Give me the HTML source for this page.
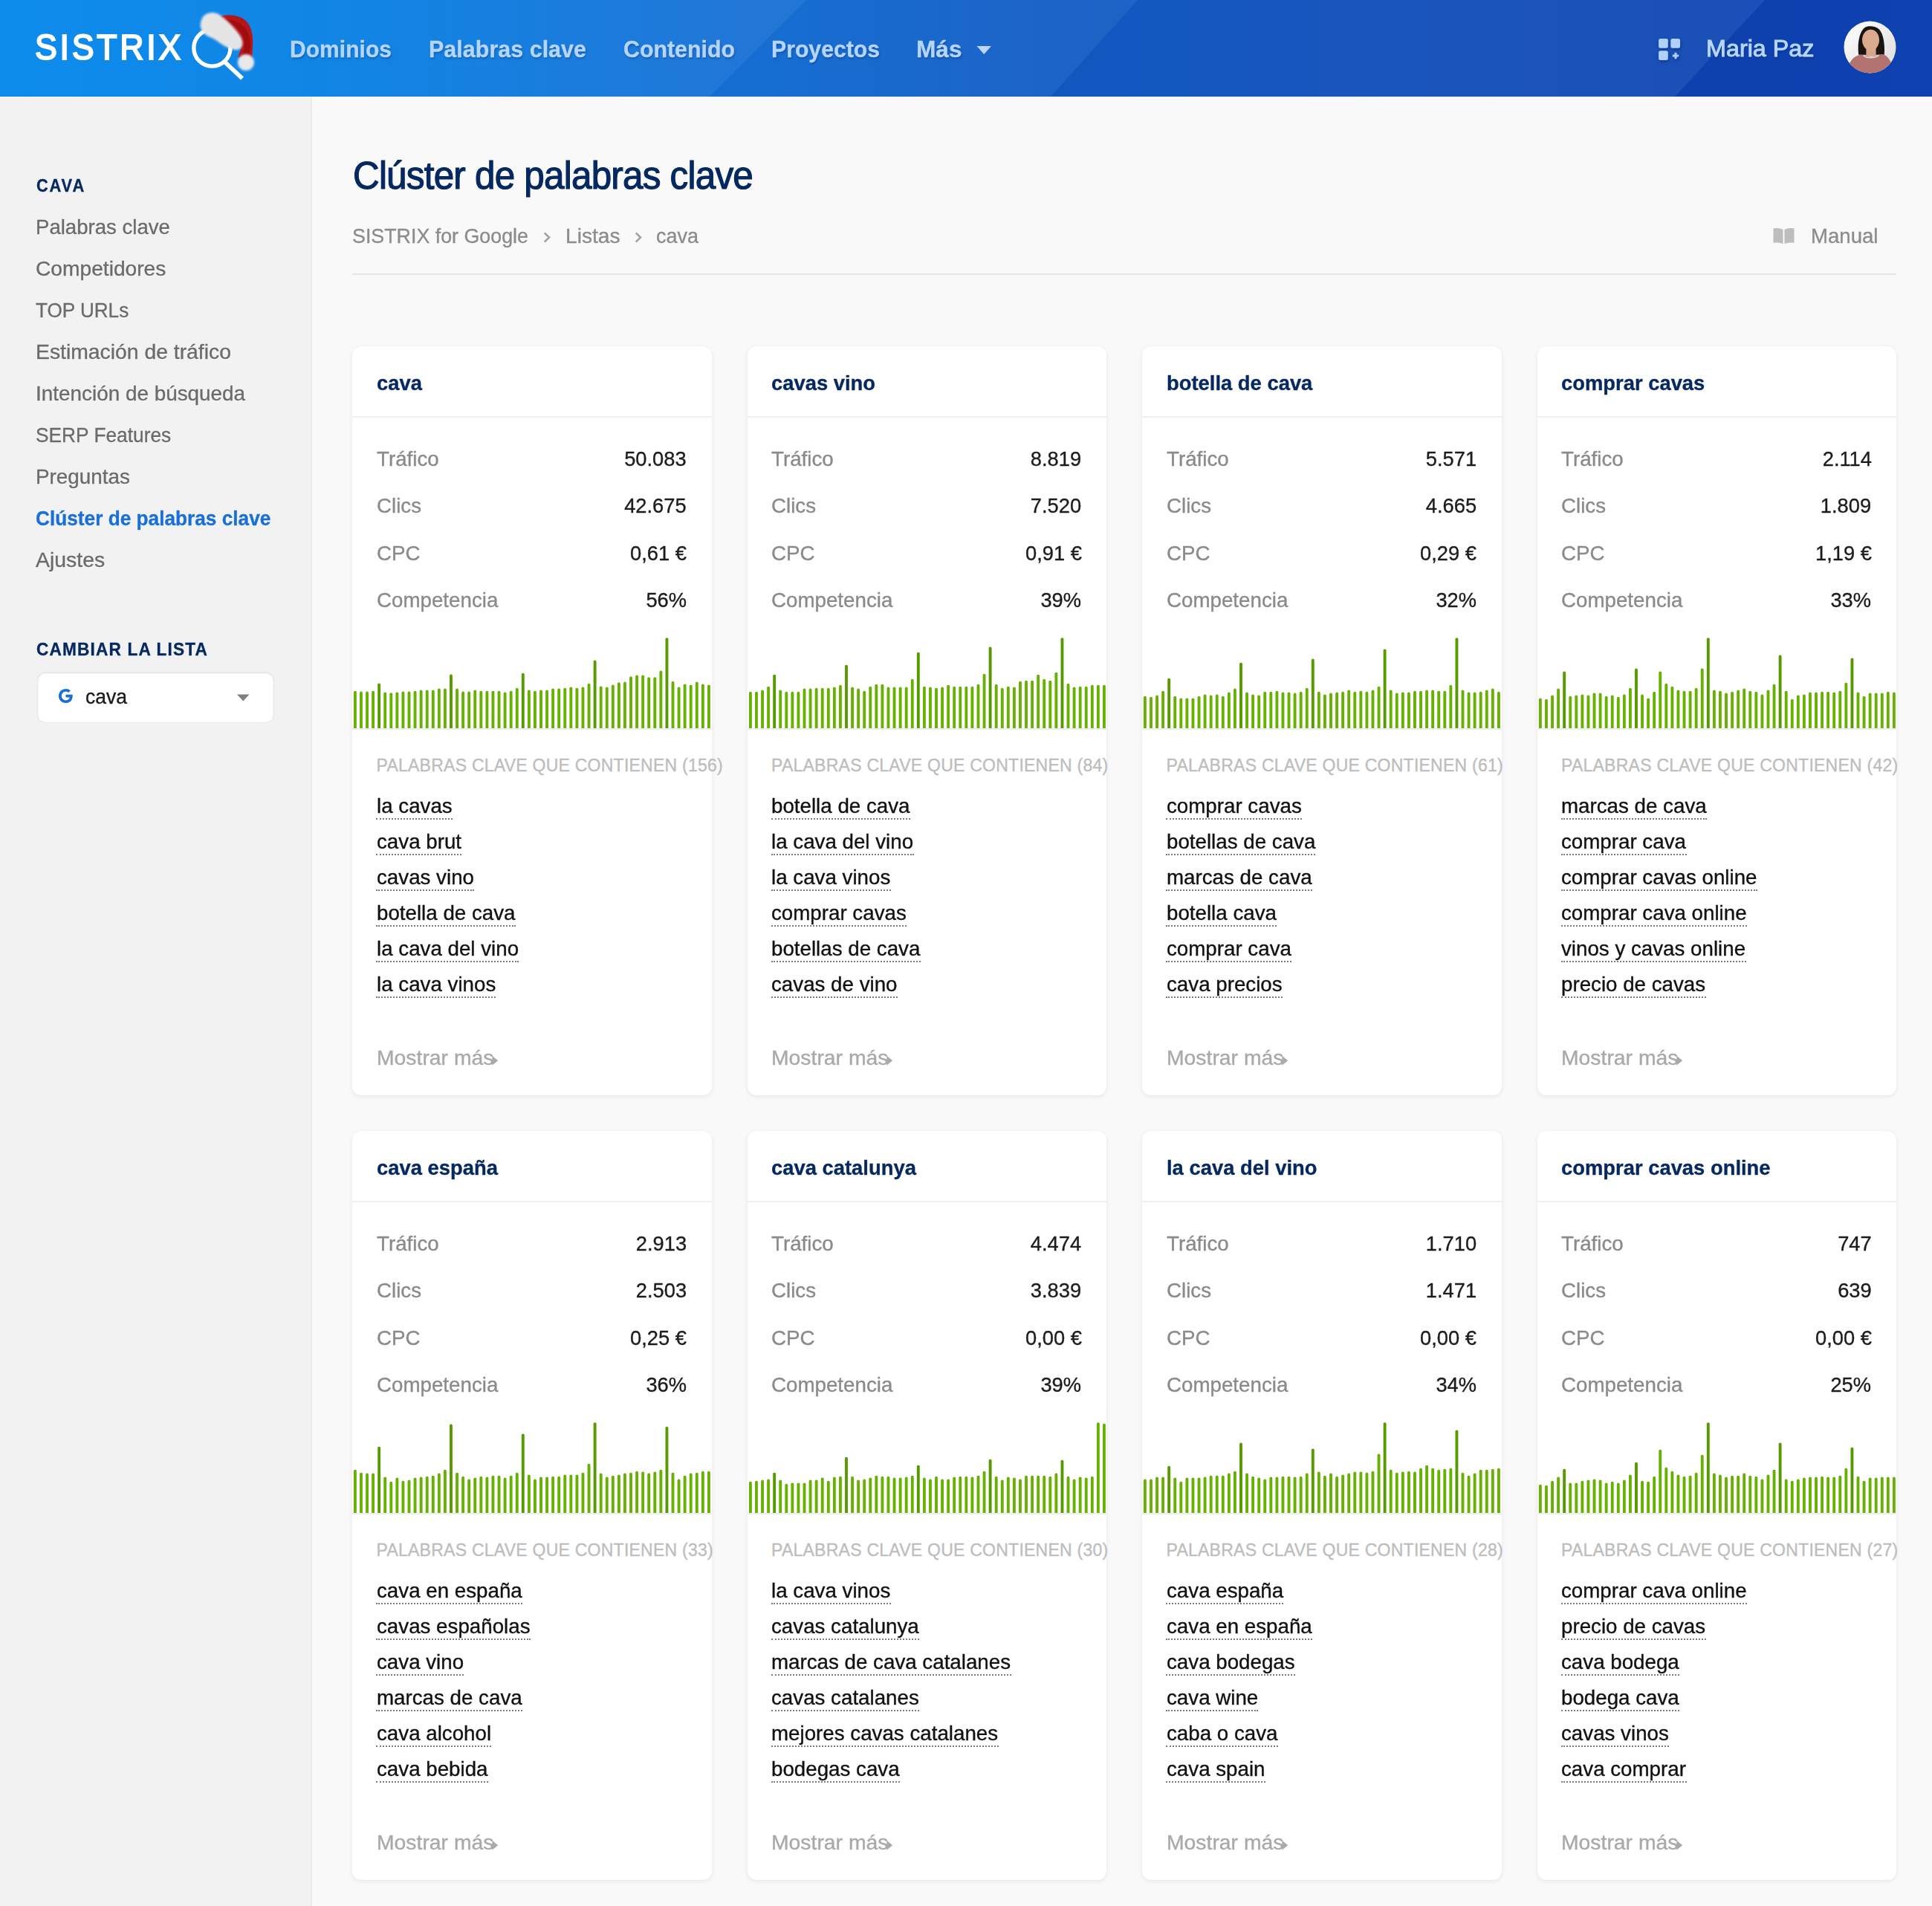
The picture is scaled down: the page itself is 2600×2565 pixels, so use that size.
<!DOCTYPE html><html><head><meta charset="utf-8"><style>
html,body{margin:0;padding:0}
body{width:2600px;height:2565px;position:relative;overflow:hidden;background:#f9f9f9;font-family:"Liberation Sans",sans-serif}
.t{position:absolute;white-space:nowrap;-webkit-text-stroke:0.35px currentColor}
.card{position:absolute;background:#fff;border-radius:12px;box-shadow:0 2px 6px rgba(0,0,0,0.07),0 0 2px rgba(0,0,0,0.03)}
.kw{position:absolute;white-space:nowrap}
</style></head><body>
<svg style="position:absolute;left:0;top:0" width="2600" height="130" viewBox="0 0 2600 130">
<defs>
<linearGradient id="g0" gradientUnits="userSpaceOnUse" x1="0" y1="0" x2="1021" y2="0"><stop offset="0" stop-color="#0d8cec"/><stop offset="0.49" stop-color="#1284e4"/><stop offset="1" stop-color="#2276d6"/></linearGradient>
<linearGradient id="g1" gradientUnits="userSpaceOnUse" x1="1021" y1="0" x2="1472" y2="0"><stop offset="0" stop-color="#166ed2"/><stop offset="1" stop-color="#1e62c6"/></linearGradient>
<linearGradient id="g2" gradientUnits="userSpaceOnUse" x1="1472" y1="0" x2="2315" y2="0"><stop offset="0" stop-color="#1257c0"/><stop offset="0.63" stop-color="#1b54bb"/><stop offset="1" stop-color="#1b50b6"/></linearGradient>
<linearGradient id="g3" gradientUnits="userSpaceOnUse" x1="2315" y1="0" x2="2600" y2="0"><stop offset="0" stop-color="#0e40ae"/><stop offset="1" stop-color="#0e42b0"/></linearGradient>
</defs>
<rect x="0" y="0" width="2600" height="130" fill="url(#g3)"/>
<polygon points="0,0 2375,0 2254,130 0,130" fill="url(#g2)"/>
<polygon points="0,0 1531,0 1414,130 0,130" fill="url(#g1)"/>
<polygon points="0,0 1085,0 955,130 0,130" fill="url(#g0)"/>
</svg>
<div class="t" style="left:47.00px;transform-origin:0 0;top:34.17px;font-size:48px;line-height:60px;color:#ffffff;font-weight:normal;letter-spacing:4px;transform:scaleX(0.9314);-webkit-text-stroke:2px #fff;">SISTRIX</div>
<svg style="position:absolute;left:240px;top:10px" width="110" height="110" viewBox="240 10 110 110">
<defs><filter id="fur" x="-30%" y="-30%" width="160%" height="160%"><feGaussianBlur stdDeviation="1.6"/></filter></defs>
<circle cx="285.4" cy="64.5" r="24.6" fill="none" stroke="#fff" stroke-width="5.4"/>
<line x1="302" y1="83" x2="326" y2="105.5" stroke="#fff" stroke-width="5.8"/>
<path d="M290,24 C304,18 322,19 332,29 C339,37 341,50 340,62 L339,79 L320,77 C324,68 326,60 324,52 C320,44 312,36 298,30 Z" fill="#b3171a"/>
<path d="M302,26 C316,25 330,33 335,47 C338,57 337,68 334,77 L325,76 C330,66 330,56 326,47 C321,38 312,31 302,26 Z" fill="#a00d0e"/>
<g filter="url(#fur)">
<path d="M271,27 C274,16 289,14 297,21 C305,27 316,37 323,48 C329,57 327,67 318,67 C308,66 300,61 292,55 C285,50 277,49 273,43 C269,38 269,32 271,27 Z" fill="#e6e5e5"/>
<circle cx="331" cy="84" r="11" fill="#e9e8e8"/>
</g>
</svg>
<div class="t" style="left:390.00px;transform-origin:0 0;top:45.91px;font-size:32px;line-height:40px;color:#b4d5fc;font-weight:bold;transform:scaleX(0.9398);text-shadow:1px 2px 3px rgba(0,30,90,0.35);">Dominios</div>
<div class="t" style="left:577.00px;transform-origin:0 0;top:45.91px;font-size:32px;line-height:40px;color:#b4d5fc;font-weight:bold;transform:scaleX(0.9533);text-shadow:1px 2px 3px rgba(0,30,90,0.35);">Palabras clave</div>
<div class="t" style="left:838.50px;transform-origin:0 0;top:45.91px;font-size:32px;line-height:40px;color:#b4d5fc;font-weight:bold;transform:scaleX(0.9482);text-shadow:1px 2px 3px rgba(0,30,90,0.35);">Contenido</div>
<div class="t" style="left:1037.50px;transform-origin:0 0;top:45.91px;font-size:32px;line-height:40px;color:#b4d5fc;font-weight:bold;transform:scaleX(0.9436);text-shadow:1px 2px 3px rgba(0,30,90,0.35);">Proyectos</div>
<div class="t" style="left:1232.50px;transform-origin:0 0;top:45.91px;font-size:32px;line-height:40px;color:#b4d5fc;font-weight:bold;transform:scaleX(0.9880);text-shadow:1px 2px 3px rgba(0,30,90,0.35);">Más</div>
<svg style="position:absolute;left:1314px;top:61px" width="21" height="13"><path d="M0.5,1 L20,1 L10.25,12 Z" fill="#b9d7fb"/></svg>
<svg style="position:absolute;left:2231px;top:51px;filter:drop-shadow(1px 2px 2px rgba(0,20,90,0.45))" width="34" height="34" viewBox="0 0 34 34">
<rect x="1.1" y="1.1" width="12.7" height="12.7" rx="2.5" fill="#afd2fc"/>
<rect x="17.3" y="1.1" width="12.8" height="12.7" rx="2.5" fill="#afd2fc"/>
<rect x="1.1" y="17.3" width="12.7" height="12.8" rx="2.5" fill="#afd2fc"/>
<path d="M22.5,19.8 h3 v2.7 h2.7 v3 h-2.7 v2.7 h-3 v-2.7 h-2.7 v-3 h2.7 z" fill="#afd2fc"/>
</svg>
<div class="t" style="left:2296.00px;transform-origin:0 0;top:45.41px;font-size:32px;line-height:40px;color:#b4d5fc;font-weight:normal;transform:scaleX(1.0101);text-shadow:1px 2px 3px rgba(0,30,90,0.35);-webkit-text-stroke:1px #b9d7fb;">Maria Paz</div>
<svg style="position:absolute;left:2481px;top:28px" width="71" height="71" viewBox="0 0 70 70">
<defs><clipPath id="av"><circle cx="35" cy="35" r="34.5"/></clipPath>
<linearGradient id="avbg" x1="0" y1="0" x2="1" y2="1"><stop offset="0" stop-color="#ffffff"/><stop offset="1" stop-color="#dcdcdc"/></linearGradient></defs>
<g clip-path="url(#av)">
<rect width="70" height="70" fill="url(#avbg)"/>
<path d="M20,45 C18,30 21,14 28,9 C33,6 42,7 47,11 C53,17 55,32 54,45 Z" fill="#1b1512"/>
<rect x="30" y="34" width="13" height="13" fill="#d6a58b"/>
<ellipse cx="36" cy="25.5" rx="11.3" ry="14" fill="#dba98e"/>
<path d="M5,70 C5,60 10,48 20,45.5 C27,43.5 33,48 37,48 C41,48 47,43.5 53,44.5 C60,47 66,58 66,70 Z" fill="#b3736e"/>
<path d="M27,45.3 C31,49 42,49 46,44.8 L47.5,45.8 C43,51 30,51 25.5,46.3 Z" fill="#d3d8d8"/>
</g></svg>
<div style="position:absolute;left:0;top:130px;width:418px;height:2435px;background:#f2f2f2;border-right:2px solid #ebebeb"></div>
<div class="t" style="left:48.50px;transform-origin:0 0;top:234.68px;font-size:24px;line-height:30px;color:#04285f;font-weight:bold;letter-spacing:2px;transform:scaleX(0.9111);">CAVA</div>
<div class="t" style="left:48.00px;transform-origin:0 0;top:288.00px;font-size:28px;line-height:35px;color:#6b6b6b;font-weight:normal;transform:scaleX(0.9848);text-shadow:0 1px 0 #fff;">Palabras clave</div>
<div class="t" style="left:48.00px;transform-origin:0 0;top:344.00px;font-size:28px;line-height:35px;color:#6b6b6b;font-weight:normal;transform:scaleX(1.0061);text-shadow:0 1px 0 #fff;">Competidores</div>
<div class="t" style="left:48.00px;transform-origin:0 0;top:400.00px;font-size:28px;line-height:35px;color:#6b6b6b;font-weight:normal;transform:scaleX(0.9318);text-shadow:0 1px 0 #fff;">TOP URLs</div>
<div class="t" style="left:48.00px;transform-origin:0 0;top:456.00px;font-size:28px;line-height:35px;color:#6b6b6b;font-weight:normal;transform:scaleX(1.0118);text-shadow:0 1px 0 #fff;">Estimación de tráfico</div>
<div class="t" style="left:48.00px;transform-origin:0 0;top:512.00px;font-size:28px;line-height:35px;color:#6b6b6b;font-weight:normal;transform:scaleX(0.9956);text-shadow:0 1px 0 #fff;">Intención de búsqueda</div>
<div class="t" style="left:48.00px;transform-origin:0 0;top:568.00px;font-size:28px;line-height:35px;color:#6b6b6b;font-weight:normal;transform:scaleX(0.9389);text-shadow:0 1px 0 #fff;">SERP Features</div>
<div class="t" style="left:48.00px;transform-origin:0 0;top:624.00px;font-size:28px;line-height:35px;color:#6b6b6b;font-weight:normal;transform:scaleX(0.9947);text-shadow:0 1px 0 #fff;">Preguntas</div>
<div class="t" style="left:48.00px;transform-origin:0 0;top:680.00px;font-size:28px;line-height:35px;color:#1a6fd6;font-weight:bold;transform:scaleX(0.9366);text-shadow:0 1px 0 #fff;">Clúster de palabras clave</div>
<div class="t" style="left:48.00px;transform-origin:0 0;top:736.00px;font-size:28px;line-height:35px;color:#6b6b6b;font-weight:normal;transform:scaleX(1.0149);text-shadow:0 1px 0 #fff;">Ajustes</div>
<div class="t" style="left:48.50px;transform-origin:0 0;top:858.68px;font-size:24px;line-height:30px;color:#04285f;font-weight:bold;letter-spacing:1.2px;transform:scaleX(0.9448);">CAMBIAR LA LISTA</div>
<div style="position:absolute;left:51px;top:905px;width:317px;height:67px;background:#fff;border-radius:10px;box-shadow:inset 0 1px 2px rgba(0,0,0,0.12),0 0 0 1px #e9e9e9"></div>
<svg style="position:absolute;left:77px;top:925px" width="23" height="23" viewBox="0 0 24 24">
<path d="M21.6,12.2 c0-0.7-0.1-1.4-0.2-2 H12 v3.9 h5.4 c-0.2,1.3-1,2.4-2.1,3.1 v2.5 h3.3 c1.9-1.8,3-4.4,3-7.5 z M12,22 c2.7,0,5-0.9,6.6-2.4 l-3.3-2.5 c-0.9,0.6-2,1-3.3,1 c-2.6,0-4.8-1.7-5.6-4.1 H3 v2.6 C4.7,19.8,8.1,22,12,22 z M6.4,13.9 C6.2,13.3,6.1,12.7,6.1,12 s0.1-1.3,0.3-1.9 V7.5 H3 C2.4,8.9,2,10.4,2,12 s0.4,3.1,1,4.5 L6.4,13.9 z M12,5.9 c1.5,0,2.8,0.5,3.8,1.5 l2.9-2.9 C17,2.9,14.7,2,12,2 C8.1,2,4.7,4.2,3,7.5 l3.4,2.6 C7.2,7.6,9.4,5.9,12,5.9 z" fill="#1b6ddb"/>
</svg>
<div class="t" style="left:114.50px;transform-origin:0 0;top:919.80px;font-size:28px;line-height:35px;color:#1a1a1a;font-weight:normal;transform:scaleX(0.9466);">cava</div>
<svg style="position:absolute;left:319px;top:934px" width="17" height="10"><path d="M0,0.5 L16.5,0.5 L8.25,9.5 Z" fill="#808080"/></svg>
<div class="t" style="left:475.00px;transform-origin:0 0;top:205.33px;font-size:51px;line-height:64px;color:#04285f;font-weight:normal;letter-spacing:-0.8px;transform:scaleX(0.9686);-webkit-text-stroke:1.2px #04285f;">Clúster de palabras clave</div>
<div class="t" style="left:474.00px;transform-origin:0 0;top:299.80px;font-size:28px;line-height:35px;color:#8c8c8c;font-weight:normal;transform:scaleX(0.9577);">SISTRIX for Google</div>
<svg style="position:absolute;left:731px;top:312px" width="11" height="16"><path d="M1.8,1.5 L8,7.5 L1.8,13.5" fill="none" stroke="#a3a3a3" stroke-width="2.6"/></svg>
<div class="t" style="left:760.50px;transform-origin:0 0;top:299.80px;font-size:28px;line-height:35px;color:#8c8c8c;font-weight:normal;transform:scaleX(1.0047);">Listas</div>
<svg style="position:absolute;left:854px;top:312px" width="11" height="16"><path d="M1.8,1.5 L8,7.5 L1.8,13.5" fill="none" stroke="#a3a3a3" stroke-width="2.6"/></svg>
<div class="t" style="left:882.50px;transform-origin:0 0;top:299.80px;font-size:28px;line-height:35px;color:#8c8c8c;font-weight:normal;transform:scaleX(0.9635);">cava</div>
<svg style="position:absolute;left:2386px;top:306px" width="29" height="23" viewBox="0 0 29 23">
<path d="M0.5,1.5 C5,0.5 9,1 13.5,3 L13.5,22.5 C9,20.5 5,20 0.5,21 Z" fill="#bdbdbd"/>
<path d="M15.5,3 C20,1 24,0.5 28.5,1.5 L28.5,21 C24,20 20,20.5 15.5,22.5 Z" fill="#bdbdbd"/>
</svg>
<div class="t" style="left:2436.50px;transform-origin:0 0;top:300.30px;font-size:28px;line-height:35px;color:#8c8c8c;font-weight:normal;transform:scaleX(0.9852);">Manual</div>
<div style="position:absolute;left:474px;top:368px;width:2078px;height:2px;background:#e6e6e6"></div>
<div class="card" style="left:474.0px;top:466px;width:483.5px;height:1008px"></div>
<div style="position:absolute;left:474.0px;top:560px;width:483.5px;height:2px;background:#efefef"></div>
<div class="t" style="left:506.50px;transform-origin:0 0;top:497.80px;font-size:28px;line-height:35px;color:#04285f;font-weight:bold;transform:scaleX(0.9780);">cava</div>
<div class="t" style="left:506.50px;transform-origin:0 0;top:599.80px;font-size:28px;line-height:35px;color:#8a8a8a;font-weight:normal;transform:scaleX(0.9900);">Tráfico</div>
<div class="t" style="right:1676.00px;transform-origin:100% 0;top:599.80px;font-size:28px;line-height:35px;color:#1c1c1c;font-weight:normal;transform:scaleX(0.9750);">50.083</div>
<div class="t" style="left:506.50px;transform-origin:0 0;top:663.30px;font-size:28px;line-height:35px;color:#8a8a8a;font-weight:normal;transform:scaleX(0.9900);">Clics</div>
<div class="t" style="right:1676.00px;transform-origin:100% 0;top:663.30px;font-size:28px;line-height:35px;color:#1c1c1c;font-weight:normal;transform:scaleX(0.9750);">42.675</div>
<div class="t" style="left:506.50px;transform-origin:0 0;top:726.80px;font-size:28px;line-height:35px;color:#8a8a8a;font-weight:normal;transform:scaleX(0.9900);">CPC</div>
<div class="t" style="right:1676.00px;transform-origin:100% 0;top:726.80px;font-size:28px;line-height:35px;color:#1c1c1c;font-weight:normal;transform:scaleX(0.9750);">0,61 €</div>
<div class="t" style="left:506.50px;transform-origin:0 0;top:790.30px;font-size:28px;line-height:35px;color:#8a8a8a;font-weight:normal;transform:scaleX(0.9900);">Competencia</div>
<div class="t" style="right:1676.00px;transform-origin:100% 0;top:790.30px;font-size:28px;line-height:35px;color:#1c1c1c;font-weight:normal;transform:scaleX(0.9750);">56%</div>
<svg style="position:absolute;left:474.0px;top:466px" width="483.5" height="520" viewBox="0 0 483.5 520"><rect x="1.95" y="463.66" width="3.9" height="52.34" rx="1.95" fill="#66b102"/><rect x="10.02" y="464.47" width="3.9" height="51.53" rx="1.95" fill="#66b102"/><rect x="18.09" y="464.47" width="3.9" height="51.53" rx="1.95" fill="#66b102"/><rect x="26.15" y="463.66" width="3.9" height="52.34" rx="1.95" fill="#66b102"/><rect x="34.22" y="453.43" width="3.9" height="62.57" rx="1.95" fill="#579a02"/><rect x="42.29" y="465.55" width="3.9" height="50.45" rx="1.95" fill="#66b102"/><rect x="50.36" y="466.36" width="3.9" height="49.64" rx="1.95" fill="#66b102"/><rect x="58.43" y="465.55" width="3.9" height="50.45" rx="1.95" fill="#66b102"/><rect x="66.49" y="464.47" width="3.9" height="51.53" rx="1.95" fill="#66b102"/><rect x="74.56" y="464.47" width="3.9" height="51.53" rx="1.95" fill="#66b102"/><rect x="82.63" y="463.66" width="3.9" height="52.34" rx="1.95" fill="#66b102"/><rect x="90.70" y="462.59" width="3.9" height="53.41" rx="1.95" fill="#66b102"/><rect x="98.77" y="462.59" width="3.9" height="53.41" rx="1.95" fill="#66b102"/><rect x="106.83" y="462.59" width="3.9" height="53.41" rx="1.95" fill="#66b102"/><rect x="114.90" y="460.43" width="3.9" height="55.57" rx="1.95" fill="#66b102"/><rect x="122.97" y="460.43" width="3.9" height="55.57" rx="1.95" fill="#66b102"/><rect x="131.04" y="441.59" width="3.9" height="74.41" rx="1.95" fill="#579a02"/><rect x="139.11" y="460.43" width="3.9" height="55.57" rx="1.95" fill="#66b102"/><rect x="147.17" y="464.47" width="3.9" height="51.53" rx="1.95" fill="#66b102"/><rect x="155.24" y="464.47" width="3.9" height="51.53" rx="1.95" fill="#66b102"/><rect x="163.31" y="462.59" width="3.9" height="53.41" rx="1.95" fill="#66b102"/><rect x="171.38" y="463.66" width="3.9" height="52.34" rx="1.95" fill="#66b102"/><rect x="179.45" y="463.66" width="3.9" height="52.34" rx="1.95" fill="#66b102"/><rect x="187.51" y="463.66" width="3.9" height="52.34" rx="1.95" fill="#66b102"/><rect x="195.58" y="463.66" width="3.9" height="52.34" rx="1.95" fill="#66b102"/><rect x="203.65" y="465.55" width="3.9" height="50.45" rx="1.95" fill="#66b102"/><rect x="211.72" y="463.66" width="3.9" height="52.34" rx="1.95" fill="#66b102"/><rect x="219.79" y="459.63" width="3.9" height="56.37" rx="1.95" fill="#66b102"/><rect x="227.85" y="439.71" width="3.9" height="76.29" rx="1.95" fill="#579a02"/><rect x="235.92" y="462.59" width="3.9" height="53.41" rx="1.95" fill="#66b102"/><rect x="243.99" y="463.66" width="3.9" height="52.34" rx="1.95" fill="#66b102"/><rect x="252.06" y="462.59" width="3.9" height="53.41" rx="1.95" fill="#66b102"/><rect x="260.13" y="462.59" width="3.9" height="53.41" rx="1.95" fill="#66b102"/><rect x="268.19" y="460.43" width="3.9" height="55.57" rx="1.95" fill="#66b102"/><rect x="276.26" y="460.43" width="3.9" height="55.57" rx="1.95" fill="#66b102"/><rect x="284.33" y="459.63" width="3.9" height="56.37" rx="1.95" fill="#66b102"/><rect x="292.40" y="458.55" width="3.9" height="57.45" rx="1.95" fill="#66b102"/><rect x="300.47" y="459.63" width="3.9" height="56.37" rx="1.95" fill="#66b102"/><rect x="308.53" y="458.55" width="3.9" height="57.45" rx="1.95" fill="#66b102"/><rect x="316.60" y="453.70" width="3.9" height="62.30" rx="1.95" fill="#66b102"/><rect x="324.67" y="422.48" width="3.9" height="93.52" rx="1.95" fill="#579a02"/><rect x="332.74" y="457.47" width="3.9" height="58.53" rx="1.95" fill="#66b102"/><rect x="340.81" y="458.55" width="3.9" height="57.45" rx="1.95" fill="#66b102"/><rect x="348.87" y="455.59" width="3.9" height="60.41" rx="1.95" fill="#66b102"/><rect x="356.94" y="452.36" width="3.9" height="63.64" rx="1.95" fill="#66b102"/><rect x="365.01" y="451.55" width="3.9" height="64.45" rx="1.95" fill="#66b102"/><rect x="373.08" y="444.28" width="3.9" height="71.72" rx="1.95" fill="#66b102"/><rect x="381.15" y="442.40" width="3.9" height="73.60" rx="1.95" fill="#66b102"/><rect x="389.21" y="442.40" width="3.9" height="73.60" rx="1.95" fill="#66b102"/><rect x="397.28" y="445.36" width="3.9" height="70.64" rx="1.95" fill="#66b102"/><rect x="405.35" y="445.36" width="3.9" height="70.64" rx="1.95" fill="#66b102"/><rect x="413.42" y="436.48" width="3.9" height="79.52" rx="1.95" fill="#66b102"/><rect x="421.49" y="392.33" width="3.9" height="123.67" rx="1.95" fill="#579a02"/><rect x="429.55" y="450.74" width="3.9" height="65.26" rx="1.95" fill="#66b102"/><rect x="437.62" y="458.55" width="3.9" height="57.45" rx="1.95" fill="#66b102"/><rect x="445.69" y="454.51" width="3.9" height="61.49" rx="1.95" fill="#66b102"/><rect x="453.76" y="455.59" width="3.9" height="60.41" rx="1.95" fill="#66b102"/><rect x="461.83" y="451.55" width="3.9" height="64.45" rx="1.95" fill="#66b102"/><rect x="469.89" y="454.51" width="3.9" height="61.49" rx="1.95" fill="#66b102"/><rect x="477.96" y="455.59" width="3.9" height="60.41" rx="1.95" fill="#66b102"/><rect x="0" y="514" width="483.5" height="2" fill="#ececec"/></svg>
<div class="t" style="left:506.50px;transform-origin:0 0;top:1015.53px;font-size:23px;line-height:29px;color:#bdbdbd;font-weight:normal;letter-spacing:0.25px;">PALABRAS CLAVE QUE CONTIENEN (156)</div>
<div class="t" style="left:506.50px;transform-origin:0 0;top:1066.80px;font-size:28px;line-height:35px;color:#111111;font-weight:normal;transform:scaleX(0.9900);">la cavas</div>
<div style="position:absolute;left:506.0px;top:1100.50px;width:102.7px;height:0;border-bottom:2px dotted #7d7d7d"></div>
<div class="t" style="left:506.50px;transform-origin:0 0;top:1114.80px;font-size:28px;line-height:35px;color:#111111;font-weight:normal;transform:scaleX(0.9900);">cava brut</div>
<div style="position:absolute;left:506.0px;top:1148.50px;width:115.1px;height:0;border-bottom:2px dotted #7d7d7d"></div>
<div class="t" style="left:506.50px;transform-origin:0 0;top:1162.80px;font-size:28px;line-height:35px;color:#111111;font-weight:normal;transform:scaleX(0.9900);">cavas vino</div>
<div style="position:absolute;left:506.0px;top:1196.50px;width:132.0px;height:0;border-bottom:2px dotted #7d7d7d"></div>
<div class="t" style="left:506.50px;transform-origin:0 0;top:1210.80px;font-size:28px;line-height:35px;color:#111111;font-weight:normal;transform:scaleX(0.9900);">botella de cava</div>
<div style="position:absolute;left:506.0px;top:1244.50px;width:187.5px;height:0;border-bottom:2px dotted #7d7d7d"></div>
<div class="t" style="left:506.50px;transform-origin:0 0;top:1258.80px;font-size:28px;line-height:35px;color:#111111;font-weight:normal;transform:scaleX(0.9900);">la cava del vino</div>
<div style="position:absolute;left:506.0px;top:1292.50px;width:192.1px;height:0;border-bottom:2px dotted #7d7d7d"></div>
<div class="t" style="left:506.50px;transform-origin:0 0;top:1306.80px;font-size:28px;line-height:35px;color:#111111;font-weight:normal;transform:scaleX(0.9900);">la cava vinos</div>
<div style="position:absolute;left:506.0px;top:1340.50px;width:161.3px;height:0;border-bottom:2px dotted #7d7d7d"></div>
<div class="t" style="left:506.50px;transform-origin:0 0;top:1405.80px;font-size:28px;line-height:35px;color:#a9a9a9;font-weight:normal;transform:scaleX(1.0120);">Mostrar más</div>
<svg style="position:absolute;left:661.5px;top:1419.5px" width="10" height="15"><path d="M0.3,0.8 L8.2,7.2 L0.3,13.8 Z" fill="#aaaaaa"/></svg>
<div class="card" style="left:1005.5px;top:466px;width:483.5px;height:1008px"></div>
<div style="position:absolute;left:1005.5px;top:560px;width:483.5px;height:2px;background:#efefef"></div>
<div class="t" style="left:1038.00px;transform-origin:0 0;top:497.80px;font-size:28px;line-height:35px;color:#04285f;font-weight:bold;transform:scaleX(0.9780);">cavas vino</div>
<div class="t" style="left:1038.00px;transform-origin:0 0;top:599.80px;font-size:28px;line-height:35px;color:#8a8a8a;font-weight:normal;transform:scaleX(0.9900);">Tráfico</div>
<div class="t" style="right:1144.50px;transform-origin:100% 0;top:599.80px;font-size:28px;line-height:35px;color:#1c1c1c;font-weight:normal;transform:scaleX(0.9750);">8.819</div>
<div class="t" style="left:1038.00px;transform-origin:0 0;top:663.30px;font-size:28px;line-height:35px;color:#8a8a8a;font-weight:normal;transform:scaleX(0.9900);">Clics</div>
<div class="t" style="right:1144.50px;transform-origin:100% 0;top:663.30px;font-size:28px;line-height:35px;color:#1c1c1c;font-weight:normal;transform:scaleX(0.9750);">7.520</div>
<div class="t" style="left:1038.00px;transform-origin:0 0;top:726.80px;font-size:28px;line-height:35px;color:#8a8a8a;font-weight:normal;transform:scaleX(0.9900);">CPC</div>
<div class="t" style="right:1144.50px;transform-origin:100% 0;top:726.80px;font-size:28px;line-height:35px;color:#1c1c1c;font-weight:normal;transform:scaleX(0.9750);">0,91 €</div>
<div class="t" style="left:1038.00px;transform-origin:0 0;top:790.30px;font-size:28px;line-height:35px;color:#8a8a8a;font-weight:normal;transform:scaleX(0.9900);">Competencia</div>
<div class="t" style="right:1144.50px;transform-origin:100% 0;top:790.30px;font-size:28px;line-height:35px;color:#1c1c1c;font-weight:normal;transform:scaleX(0.9750);">39%</div>
<svg style="position:absolute;left:1005.5px;top:466px" width="483.5" height="520" viewBox="0 0 483.5 520"><rect x="1.95" y="464.74" width="3.9" height="51.26" rx="1.95" fill="#66b102"/><rect x="10.02" y="464.74" width="3.9" height="51.26" rx="1.95" fill="#66b102"/><rect x="18.09" y="462.59" width="3.9" height="53.41" rx="1.95" fill="#66b102"/><rect x="26.15" y="457.74" width="3.9" height="58.26" rx="1.95" fill="#66b102"/><rect x="34.22" y="441.86" width="3.9" height="74.14" rx="1.95" fill="#579a02"/><rect x="42.29" y="462.59" width="3.9" height="53.41" rx="1.95" fill="#66b102"/><rect x="50.36" y="464.74" width="3.9" height="51.26" rx="1.95" fill="#66b102"/><rect x="58.43" y="464.74" width="3.9" height="51.26" rx="1.95" fill="#66b102"/><rect x="66.49" y="464.74" width="3.9" height="51.26" rx="1.95" fill="#66b102"/><rect x="74.56" y="460.43" width="3.9" height="55.57" rx="1.95" fill="#66b102"/><rect x="82.63" y="460.43" width="3.9" height="55.57" rx="1.95" fill="#66b102"/><rect x="90.70" y="459.63" width="3.9" height="56.37" rx="1.95" fill="#66b102"/><rect x="98.77" y="459.63" width="3.9" height="56.37" rx="1.95" fill="#66b102"/><rect x="106.83" y="459.63" width="3.9" height="56.37" rx="1.95" fill="#66b102"/><rect x="114.90" y="458.55" width="3.9" height="57.45" rx="1.95" fill="#66b102"/><rect x="122.97" y="455.86" width="3.9" height="60.14" rx="1.95" fill="#66b102"/><rect x="131.04" y="428.67" width="3.9" height="87.33" rx="1.95" fill="#579a02"/><rect x="139.11" y="458.55" width="3.9" height="57.45" rx="1.95" fill="#66b102"/><rect x="147.17" y="460.43" width="3.9" height="55.57" rx="1.95" fill="#66b102"/><rect x="155.24" y="463.66" width="3.9" height="52.34" rx="1.95" fill="#66b102"/><rect x="163.31" y="457.74" width="3.9" height="58.26" rx="1.95" fill="#66b102"/><rect x="171.38" y="454.78" width="3.9" height="61.22" rx="1.95" fill="#66b102"/><rect x="179.45" y="454.78" width="3.9" height="61.22" rx="1.95" fill="#66b102"/><rect x="187.51" y="458.55" width="3.9" height="57.45" rx="1.95" fill="#66b102"/><rect x="195.58" y="458.55" width="3.9" height="57.45" rx="1.95" fill="#66b102"/><rect x="203.65" y="458.55" width="3.9" height="57.45" rx="1.95" fill="#66b102"/><rect x="211.72" y="458.55" width="3.9" height="57.45" rx="1.95" fill="#66b102"/><rect x="219.79" y="447.78" width="3.9" height="68.22" rx="1.95" fill="#66b102"/><rect x="227.85" y="411.71" width="3.9" height="104.29" rx="1.95" fill="#579a02"/><rect x="235.92" y="457.74" width="3.9" height="58.26" rx="1.95" fill="#66b102"/><rect x="243.99" y="458.55" width="3.9" height="57.45" rx="1.95" fill="#66b102"/><rect x="252.06" y="459.63" width="3.9" height="56.37" rx="1.95" fill="#66b102"/><rect x="260.13" y="458.55" width="3.9" height="57.45" rx="1.95" fill="#66b102"/><rect x="268.19" y="455.86" width="3.9" height="60.14" rx="1.95" fill="#66b102"/><rect x="276.26" y="457.74" width="3.9" height="58.26" rx="1.95" fill="#66b102"/><rect x="284.33" y="457.74" width="3.9" height="58.26" rx="1.95" fill="#66b102"/><rect x="292.40" y="457.74" width="3.9" height="58.26" rx="1.95" fill="#66b102"/><rect x="300.47" y="457.74" width="3.9" height="58.26" rx="1.95" fill="#66b102"/><rect x="308.53" y="454.78" width="3.9" height="61.22" rx="1.95" fill="#66b102"/><rect x="316.60" y="440.78" width="3.9" height="75.22" rx="1.95" fill="#66b102"/><rect x="324.67" y="404.44" width="3.9" height="111.56" rx="1.95" fill="#579a02"/><rect x="332.74" y="454.78" width="3.9" height="61.22" rx="1.95" fill="#66b102"/><rect x="340.81" y="459.63" width="3.9" height="56.37" rx="1.95" fill="#66b102"/><rect x="348.87" y="457.74" width="3.9" height="58.26" rx="1.95" fill="#66b102"/><rect x="356.94" y="458.55" width="3.9" height="57.45" rx="1.95" fill="#66b102"/><rect x="365.01" y="450.74" width="3.9" height="65.26" rx="1.95" fill="#66b102"/><rect x="373.08" y="449.67" width="3.9" height="66.33" rx="1.95" fill="#66b102"/><rect x="381.15" y="449.67" width="3.9" height="66.33" rx="1.95" fill="#66b102"/><rect x="389.21" y="441.86" width="3.9" height="74.14" rx="1.95" fill="#66b102"/><rect x="397.28" y="447.78" width="3.9" height="68.22" rx="1.95" fill="#66b102"/><rect x="405.35" y="449.67" width="3.9" height="66.33" rx="1.95" fill="#66b102"/><rect x="413.42" y="438.63" width="3.9" height="77.37" rx="1.95" fill="#66b102"/><rect x="421.49" y="392.33" width="3.9" height="123.67" rx="1.95" fill="#579a02"/><rect x="429.55" y="453.70" width="3.9" height="62.30" rx="1.95" fill="#66b102"/><rect x="437.62" y="458.55" width="3.9" height="57.45" rx="1.95" fill="#66b102"/><rect x="445.69" y="457.74" width="3.9" height="58.26" rx="1.95" fill="#66b102"/><rect x="453.76" y="457.74" width="3.9" height="58.26" rx="1.95" fill="#66b102"/><rect x="461.83" y="455.86" width="3.9" height="60.14" rx="1.95" fill="#66b102"/><rect x="469.89" y="455.86" width="3.9" height="60.14" rx="1.95" fill="#66b102"/><rect x="477.96" y="455.86" width="3.9" height="60.14" rx="1.95" fill="#66b102"/><rect x="0" y="514" width="483.5" height="2" fill="#ececec"/></svg>
<div class="t" style="left:1038.00px;transform-origin:0 0;top:1015.53px;font-size:23px;line-height:29px;color:#bdbdbd;font-weight:normal;letter-spacing:0.25px;">PALABRAS CLAVE QUE CONTIENEN (84)</div>
<div class="t" style="left:1038.00px;transform-origin:0 0;top:1066.80px;font-size:28px;line-height:35px;color:#111111;font-weight:normal;transform:scaleX(0.9900);">botella de cava</div>
<div style="position:absolute;left:1037.5px;top:1100.50px;width:187.5px;height:0;border-bottom:2px dotted #7d7d7d"></div>
<div class="t" style="left:1038.00px;transform-origin:0 0;top:1114.80px;font-size:28px;line-height:35px;color:#111111;font-weight:normal;transform:scaleX(0.9900);">la cava del vino</div>
<div style="position:absolute;left:1037.5px;top:1148.50px;width:192.1px;height:0;border-bottom:2px dotted #7d7d7d"></div>
<div class="t" style="left:1038.00px;transform-origin:0 0;top:1162.80px;font-size:28px;line-height:35px;color:#111111;font-weight:normal;transform:scaleX(0.9900);">la cava vinos</div>
<div style="position:absolute;left:1037.5px;top:1196.50px;width:161.3px;height:0;border-bottom:2px dotted #7d7d7d"></div>
<div class="t" style="left:1038.00px;transform-origin:0 0;top:1210.80px;font-size:28px;line-height:35px;color:#111111;font-weight:normal;transform:scaleX(0.9900);">comprar cavas</div>
<div style="position:absolute;left:1037.5px;top:1244.50px;width:182.8px;height:0;border-bottom:2px dotted #7d7d7d"></div>
<div class="t" style="left:1038.00px;transform-origin:0 0;top:1258.80px;font-size:28px;line-height:35px;color:#111111;font-weight:normal;transform:scaleX(0.9900);">botellas de cava</div>
<div style="position:absolute;left:1037.5px;top:1292.50px;width:201.4px;height:0;border-bottom:2px dotted #7d7d7d"></div>
<div class="t" style="left:1038.00px;transform-origin:0 0;top:1306.80px;font-size:28px;line-height:35px;color:#111111;font-weight:normal;transform:scaleX(0.9900);">cavas de vino</div>
<div style="position:absolute;left:1037.5px;top:1340.50px;width:170.5px;height:0;border-bottom:2px dotted #7d7d7d"></div>
<div class="t" style="left:1038.00px;transform-origin:0 0;top:1405.80px;font-size:28px;line-height:35px;color:#a9a9a9;font-weight:normal;transform:scaleX(1.0120);">Mostrar más</div>
<svg style="position:absolute;left:1193.0px;top:1419.5px" width="10" height="15"><path d="M0.3,0.8 L8.2,7.2 L0.3,13.8 Z" fill="#aaaaaa"/></svg>
<div class="card" style="left:1537.0px;top:466px;width:483.5px;height:1008px"></div>
<div style="position:absolute;left:1537.0px;top:560px;width:483.5px;height:2px;background:#efefef"></div>
<div class="t" style="left:1569.50px;transform-origin:0 0;top:497.80px;font-size:28px;line-height:35px;color:#04285f;font-weight:bold;transform:scaleX(0.9780);">botella de cava</div>
<div class="t" style="left:1569.50px;transform-origin:0 0;top:599.80px;font-size:28px;line-height:35px;color:#8a8a8a;font-weight:normal;transform:scaleX(0.9900);">Tráfico</div>
<div class="t" style="right:613.00px;transform-origin:100% 0;top:599.80px;font-size:28px;line-height:35px;color:#1c1c1c;font-weight:normal;transform:scaleX(0.9750);">5.571</div>
<div class="t" style="left:1569.50px;transform-origin:0 0;top:663.30px;font-size:28px;line-height:35px;color:#8a8a8a;font-weight:normal;transform:scaleX(0.9900);">Clics</div>
<div class="t" style="right:613.00px;transform-origin:100% 0;top:663.30px;font-size:28px;line-height:35px;color:#1c1c1c;font-weight:normal;transform:scaleX(0.9750);">4.665</div>
<div class="t" style="left:1569.50px;transform-origin:0 0;top:726.80px;font-size:28px;line-height:35px;color:#8a8a8a;font-weight:normal;transform:scaleX(0.9900);">CPC</div>
<div class="t" style="right:613.00px;transform-origin:100% 0;top:726.80px;font-size:28px;line-height:35px;color:#1c1c1c;font-weight:normal;transform:scaleX(0.9750);">0,29 €</div>
<div class="t" style="left:1569.50px;transform-origin:0 0;top:790.30px;font-size:28px;line-height:35px;color:#8a8a8a;font-weight:normal;transform:scaleX(0.9900);">Competencia</div>
<div class="t" style="right:613.00px;transform-origin:100% 0;top:790.30px;font-size:28px;line-height:35px;color:#1c1c1c;font-weight:normal;transform:scaleX(0.9750);">32%</div>
<svg style="position:absolute;left:1537.0px;top:466px" width="483.5" height="520" viewBox="0 0 483.5 520"><rect x="1.95" y="470.66" width="3.9" height="45.34" rx="1.95" fill="#66b102"/><rect x="10.02" y="471.74" width="3.9" height="44.26" rx="1.95" fill="#66b102"/><rect x="18.09" y="469.59" width="3.9" height="46.41" rx="1.95" fill="#66b102"/><rect x="26.15" y="463.66" width="3.9" height="52.34" rx="1.95" fill="#66b102"/><rect x="34.22" y="446.71" width="3.9" height="69.29" rx="1.95" fill="#579a02"/><rect x="42.29" y="470.66" width="3.9" height="45.34" rx="1.95" fill="#66b102"/><rect x="50.36" y="473.62" width="3.9" height="42.38" rx="1.95" fill="#66b102"/><rect x="58.43" y="473.62" width="3.9" height="42.38" rx="1.95" fill="#66b102"/><rect x="66.49" y="473.62" width="3.9" height="42.38" rx="1.95" fill="#66b102"/><rect x="74.56" y="470.66" width="3.9" height="45.34" rx="1.95" fill="#66b102"/><rect x="82.63" y="468.51" width="3.9" height="47.49" rx="1.95" fill="#66b102"/><rect x="90.70" y="469.59" width="3.9" height="46.41" rx="1.95" fill="#66b102"/><rect x="98.77" y="468.51" width="3.9" height="47.49" rx="1.95" fill="#66b102"/><rect x="106.83" y="470.66" width="3.9" height="45.34" rx="1.95" fill="#66b102"/><rect x="114.90" y="465.55" width="3.9" height="50.45" rx="1.95" fill="#66b102"/><rect x="122.97" y="460.43" width="3.9" height="55.57" rx="1.95" fill="#66b102"/><rect x="131.04" y="425.71" width="3.9" height="90.29" rx="1.95" fill="#579a02"/><rect x="139.11" y="465.55" width="3.9" height="50.45" rx="1.95" fill="#66b102"/><rect x="147.17" y="468.51" width="3.9" height="47.49" rx="1.95" fill="#66b102"/><rect x="155.24" y="469.59" width="3.9" height="46.41" rx="1.95" fill="#66b102"/><rect x="163.31" y="464.74" width="3.9" height="51.26" rx="1.95" fill="#66b102"/><rect x="171.38" y="464.74" width="3.9" height="51.26" rx="1.95" fill="#66b102"/><rect x="179.45" y="463.66" width="3.9" height="52.34" rx="1.95" fill="#66b102"/><rect x="187.51" y="465.55" width="3.9" height="50.45" rx="1.95" fill="#66b102"/><rect x="195.58" y="465.55" width="3.9" height="50.45" rx="1.95" fill="#66b102"/><rect x="203.65" y="466.62" width="3.9" height="49.38" rx="1.95" fill="#66b102"/><rect x="211.72" y="464.74" width="3.9" height="51.26" rx="1.95" fill="#66b102"/><rect x="219.79" y="459.63" width="3.9" height="56.37" rx="1.95" fill="#66b102"/><rect x="227.85" y="420.59" width="3.9" height="95.41" rx="1.95" fill="#579a02"/><rect x="235.92" y="464.74" width="3.9" height="51.26" rx="1.95" fill="#66b102"/><rect x="243.99" y="468.51" width="3.9" height="47.49" rx="1.95" fill="#66b102"/><rect x="252.06" y="466.62" width="3.9" height="49.38" rx="1.95" fill="#66b102"/><rect x="260.13" y="465.55" width="3.9" height="50.45" rx="1.95" fill="#66b102"/><rect x="268.19" y="464.74" width="3.9" height="51.26" rx="1.95" fill="#66b102"/><rect x="276.26" y="462.59" width="3.9" height="53.41" rx="1.95" fill="#66b102"/><rect x="284.33" y="464.74" width="3.9" height="51.26" rx="1.95" fill="#66b102"/><rect x="292.40" y="463.66" width="3.9" height="52.34" rx="1.95" fill="#66b102"/><rect x="300.47" y="464.74" width="3.9" height="51.26" rx="1.95" fill="#66b102"/><rect x="308.53" y="462.59" width="3.9" height="53.41" rx="1.95" fill="#66b102"/><rect x="316.60" y="457.74" width="3.9" height="58.26" rx="1.95" fill="#66b102"/><rect x="324.67" y="407.41" width="3.9" height="108.59" rx="1.95" fill="#579a02"/><rect x="332.74" y="462.59" width="3.9" height="53.41" rx="1.95" fill="#66b102"/><rect x="340.81" y="466.62" width="3.9" height="49.38" rx="1.95" fill="#66b102"/><rect x="348.87" y="465.55" width="3.9" height="50.45" rx="1.95" fill="#66b102"/><rect x="356.94" y="465.55" width="3.9" height="50.45" rx="1.95" fill="#66b102"/><rect x="365.01" y="463.66" width="3.9" height="52.34" rx="1.95" fill="#66b102"/><rect x="373.08" y="463.66" width="3.9" height="52.34" rx="1.95" fill="#66b102"/><rect x="381.15" y="462.59" width="3.9" height="53.41" rx="1.95" fill="#66b102"/><rect x="389.21" y="462.59" width="3.9" height="53.41" rx="1.95" fill="#66b102"/><rect x="397.28" y="463.66" width="3.9" height="52.34" rx="1.95" fill="#66b102"/><rect x="405.35" y="463.66" width="3.9" height="52.34" rx="1.95" fill="#66b102"/><rect x="413.42" y="455.86" width="3.9" height="60.14" rx="1.95" fill="#66b102"/><rect x="421.49" y="392.33" width="3.9" height="123.67" rx="1.95" fill="#579a02"/><rect x="429.55" y="462.59" width="3.9" height="53.41" rx="1.95" fill="#66b102"/><rect x="437.62" y="465.55" width="3.9" height="50.45" rx="1.95" fill="#66b102"/><rect x="445.69" y="465.55" width="3.9" height="50.45" rx="1.95" fill="#66b102"/><rect x="453.76" y="464.74" width="3.9" height="51.26" rx="1.95" fill="#66b102"/><rect x="461.83" y="462.59" width="3.9" height="53.41" rx="1.95" fill="#66b102"/><rect x="469.89" y="460.43" width="3.9" height="55.57" rx="1.95" fill="#66b102"/><rect x="477.96" y="464.74" width="3.9" height="51.26" rx="1.95" fill="#66b102"/><rect x="0" y="514" width="483.5" height="2" fill="#ececec"/></svg>
<div class="t" style="left:1569.50px;transform-origin:0 0;top:1015.53px;font-size:23px;line-height:29px;color:#bdbdbd;font-weight:normal;letter-spacing:0.25px;">PALABRAS CLAVE QUE CONTIENEN (61)</div>
<div class="t" style="left:1569.50px;transform-origin:0 0;top:1066.80px;font-size:28px;line-height:35px;color:#111111;font-weight:normal;transform:scaleX(0.9900);">comprar cavas</div>
<div style="position:absolute;left:1569.0px;top:1100.50px;width:182.8px;height:0;border-bottom:2px dotted #7d7d7d"></div>
<div class="t" style="left:1569.50px;transform-origin:0 0;top:1114.80px;font-size:28px;line-height:35px;color:#111111;font-weight:normal;transform:scaleX(0.9900);">botellas de cava</div>
<div style="position:absolute;left:1569.0px;top:1148.50px;width:201.4px;height:0;border-bottom:2px dotted #7d7d7d"></div>
<div class="t" style="left:1569.50px;transform-origin:0 0;top:1162.80px;font-size:28px;line-height:35px;color:#111111;font-weight:normal;transform:scaleX(0.9900);">marcas de cava</div>
<div style="position:absolute;left:1569.0px;top:1196.50px;width:196.7px;height:0;border-bottom:2px dotted #7d7d7d"></div>
<div class="t" style="left:1569.50px;transform-origin:0 0;top:1210.80px;font-size:28px;line-height:35px;color:#111111;font-weight:normal;transform:scaleX(0.9900);">botella cava</div>
<div style="position:absolute;left:1569.0px;top:1244.50px;width:149.0px;height:0;border-bottom:2px dotted #7d7d7d"></div>
<div class="t" style="left:1569.50px;transform-origin:0 0;top:1258.80px;font-size:28px;line-height:35px;color:#111111;font-weight:normal;transform:scaleX(0.9900);">comprar cava</div>
<div style="position:absolute;left:1569.0px;top:1292.50px;width:169.0px;height:0;border-bottom:2px dotted #7d7d7d"></div>
<div class="t" style="left:1569.50px;transform-origin:0 0;top:1306.80px;font-size:28px;line-height:35px;color:#111111;font-weight:normal;transform:scaleX(0.9900);">cava precios</div>
<div style="position:absolute;left:1569.0px;top:1340.50px;width:156.6px;height:0;border-bottom:2px dotted #7d7d7d"></div>
<div class="t" style="left:1569.50px;transform-origin:0 0;top:1405.80px;font-size:28px;line-height:35px;color:#a9a9a9;font-weight:normal;transform:scaleX(1.0120);">Mostrar más</div>
<svg style="position:absolute;left:1724.5px;top:1419.5px" width="10" height="15"><path d="M0.3,0.8 L8.2,7.2 L0.3,13.8 Z" fill="#aaaaaa"/></svg>
<div class="card" style="left:2068.5px;top:466px;width:483.5px;height:1008px"></div>
<div style="position:absolute;left:2068.5px;top:560px;width:483.5px;height:2px;background:#efefef"></div>
<div class="t" style="left:2101.00px;transform-origin:0 0;top:497.80px;font-size:28px;line-height:35px;color:#04285f;font-weight:bold;transform:scaleX(0.9780);">comprar cavas</div>
<div class="t" style="left:2101.00px;transform-origin:0 0;top:599.80px;font-size:28px;line-height:35px;color:#8a8a8a;font-weight:normal;transform:scaleX(0.9900);">Tráfico</div>
<div class="t" style="right:81.50px;transform-origin:100% 0;top:599.80px;font-size:28px;line-height:35px;color:#1c1c1c;font-weight:normal;transform:scaleX(0.9750);">2.114</div>
<div class="t" style="left:2101.00px;transform-origin:0 0;top:663.30px;font-size:28px;line-height:35px;color:#8a8a8a;font-weight:normal;transform:scaleX(0.9900);">Clics</div>
<div class="t" style="right:81.50px;transform-origin:100% 0;top:663.30px;font-size:28px;line-height:35px;color:#1c1c1c;font-weight:normal;transform:scaleX(0.9750);">1.809</div>
<div class="t" style="left:2101.00px;transform-origin:0 0;top:726.80px;font-size:28px;line-height:35px;color:#8a8a8a;font-weight:normal;transform:scaleX(0.9900);">CPC</div>
<div class="t" style="right:81.50px;transform-origin:100% 0;top:726.80px;font-size:28px;line-height:35px;color:#1c1c1c;font-weight:normal;transform:scaleX(0.9750);">1,19 €</div>
<div class="t" style="left:2101.00px;transform-origin:0 0;top:790.30px;font-size:28px;line-height:35px;color:#8a8a8a;font-weight:normal;transform:scaleX(0.9900);">Competencia</div>
<div class="t" style="right:81.50px;transform-origin:100% 0;top:790.30px;font-size:28px;line-height:35px;color:#1c1c1c;font-weight:normal;transform:scaleX(0.9750);">33%</div>
<svg style="position:absolute;left:2068.5px;top:466px" width="483.5" height="520" viewBox="0 0 483.5 520"><rect x="1.95" y="473.62" width="3.9" height="42.38" rx="1.95" fill="#66b102"/><rect x="10.02" y="474.70" width="3.9" height="41.30" rx="1.95" fill="#66b102"/><rect x="18.09" y="469.59" width="3.9" height="46.41" rx="1.95" fill="#66b102"/><rect x="26.15" y="460.43" width="3.9" height="55.57" rx="1.95" fill="#66b102"/><rect x="34.22" y="437.55" width="3.9" height="78.45" rx="1.95" fill="#579a02"/><rect x="42.29" y="470.66" width="3.9" height="45.34" rx="1.95" fill="#66b102"/><rect x="50.36" y="469.59" width="3.9" height="46.41" rx="1.95" fill="#66b102"/><rect x="58.43" y="468.51" width="3.9" height="47.49" rx="1.95" fill="#66b102"/><rect x="66.49" y="469.59" width="3.9" height="46.41" rx="1.95" fill="#66b102"/><rect x="74.56" y="466.62" width="3.9" height="49.38" rx="1.95" fill="#66b102"/><rect x="82.63" y="466.62" width="3.9" height="49.38" rx="1.95" fill="#66b102"/><rect x="90.70" y="470.66" width="3.9" height="45.34" rx="1.95" fill="#66b102"/><rect x="98.77" y="469.59" width="3.9" height="46.41" rx="1.95" fill="#66b102"/><rect x="106.83" y="471.74" width="3.9" height="44.26" rx="1.95" fill="#66b102"/><rect x="114.90" y="468.51" width="3.9" height="47.49" rx="1.95" fill="#66b102"/><rect x="122.97" y="459.63" width="3.9" height="56.37" rx="1.95" fill="#66b102"/><rect x="131.04" y="433.52" width="3.9" height="82.48" rx="1.95" fill="#579a02"/><rect x="139.11" y="468.51" width="3.9" height="47.49" rx="1.95" fill="#66b102"/><rect x="147.17" y="473.62" width="3.9" height="42.38" rx="1.95" fill="#66b102"/><rect x="155.24" y="464.74" width="3.9" height="51.26" rx="1.95" fill="#66b102"/><rect x="163.31" y="437.55" width="3.9" height="78.45" rx="1.95" fill="#66b102"/><rect x="171.38" y="453.70" width="3.9" height="62.30" rx="1.95" fill="#66b102"/><rect x="179.45" y="457.74" width="3.9" height="58.26" rx="1.95" fill="#66b102"/><rect x="187.51" y="462.59" width="3.9" height="53.41" rx="1.95" fill="#66b102"/><rect x="195.58" y="463.66" width="3.9" height="52.34" rx="1.95" fill="#66b102"/><rect x="203.65" y="463.66" width="3.9" height="52.34" rx="1.95" fill="#66b102"/><rect x="211.72" y="459.63" width="3.9" height="56.37" rx="1.95" fill="#66b102"/><rect x="219.79" y="433.52" width="3.9" height="82.48" rx="1.95" fill="#66b102"/><rect x="227.85" y="392.33" width="3.9" height="123.67" rx="1.95" fill="#579a02"/><rect x="235.92" y="462.59" width="3.9" height="53.41" rx="1.95" fill="#66b102"/><rect x="243.99" y="463.66" width="3.9" height="52.34" rx="1.95" fill="#66b102"/><rect x="252.06" y="466.62" width="3.9" height="49.38" rx="1.95" fill="#66b102"/><rect x="260.13" y="464.74" width="3.9" height="51.26" rx="1.95" fill="#66b102"/><rect x="268.19" y="462.59" width="3.9" height="53.41" rx="1.95" fill="#66b102"/><rect x="276.26" y="460.43" width="3.9" height="55.57" rx="1.95" fill="#66b102"/><rect x="284.33" y="463.66" width="3.9" height="52.34" rx="1.95" fill="#66b102"/><rect x="292.40" y="464.74" width="3.9" height="51.26" rx="1.95" fill="#66b102"/><rect x="300.47" y="468.51" width="3.9" height="47.49" rx="1.95" fill="#66b102"/><rect x="308.53" y="462.59" width="3.9" height="53.41" rx="1.95" fill="#66b102"/><rect x="316.60" y="454.78" width="3.9" height="61.22" rx="1.95" fill="#66b102"/><rect x="324.67" y="415.48" width="3.9" height="100.52" rx="1.95" fill="#579a02"/><rect x="332.74" y="463.66" width="3.9" height="52.34" rx="1.95" fill="#66b102"/><rect x="340.81" y="474.70" width="3.9" height="41.30" rx="1.95" fill="#66b102"/><rect x="348.87" y="469.59" width="3.9" height="46.41" rx="1.95" fill="#66b102"/><rect x="356.94" y="468.51" width="3.9" height="47.49" rx="1.95" fill="#66b102"/><rect x="365.01" y="465.55" width="3.9" height="50.45" rx="1.95" fill="#66b102"/><rect x="373.08" y="465.55" width="3.9" height="50.45" rx="1.95" fill="#66b102"/><rect x="381.15" y="464.74" width="3.9" height="51.26" rx="1.95" fill="#66b102"/><rect x="389.21" y="464.74" width="3.9" height="51.26" rx="1.95" fill="#66b102"/><rect x="397.28" y="465.55" width="3.9" height="50.45" rx="1.95" fill="#66b102"/><rect x="405.35" y="463.66" width="3.9" height="52.34" rx="1.95" fill="#66b102"/><rect x="413.42" y="452.63" width="3.9" height="63.37" rx="1.95" fill="#66b102"/><rect x="421.49" y="419.52" width="3.9" height="96.48" rx="1.95" fill="#579a02"/><rect x="429.55" y="465.55" width="3.9" height="50.45" rx="1.95" fill="#66b102"/><rect x="437.62" y="470.66" width="3.9" height="45.34" rx="1.95" fill="#66b102"/><rect x="445.69" y="466.62" width="3.9" height="49.38" rx="1.95" fill="#66b102"/><rect x="453.76" y="466.62" width="3.9" height="49.38" rx="1.95" fill="#66b102"/><rect x="461.83" y="466.62" width="3.9" height="49.38" rx="1.95" fill="#66b102"/><rect x="469.89" y="464.74" width="3.9" height="51.26" rx="1.95" fill="#66b102"/><rect x="477.96" y="465.55" width="3.9" height="50.45" rx="1.95" fill="#66b102"/><rect x="0" y="514" width="483.5" height="2" fill="#ececec"/></svg>
<div class="t" style="left:2101.00px;transform-origin:0 0;top:1015.53px;font-size:23px;line-height:29px;color:#bdbdbd;font-weight:normal;letter-spacing:0.25px;">PALABRAS CLAVE QUE CONTIENEN (42)</div>
<div class="t" style="left:2101.00px;transform-origin:0 0;top:1066.80px;font-size:28px;line-height:35px;color:#111111;font-weight:normal;transform:scaleX(0.9900);">marcas de cava</div>
<div style="position:absolute;left:2100.5px;top:1100.50px;width:196.7px;height:0;border-bottom:2px dotted #7d7d7d"></div>
<div class="t" style="left:2101.00px;transform-origin:0 0;top:1114.80px;font-size:28px;line-height:35px;color:#111111;font-weight:normal;transform:scaleX(0.9900);">comprar cava</div>
<div style="position:absolute;left:2100.5px;top:1148.50px;width:169.0px;height:0;border-bottom:2px dotted #7d7d7d"></div>
<div class="t" style="left:2101.00px;transform-origin:0 0;top:1162.80px;font-size:28px;line-height:35px;color:#111111;font-weight:normal;transform:scaleX(0.9900);">comprar cavas online</div>
<div style="position:absolute;left:2100.5px;top:1196.50px;width:264.5px;height:0;border-bottom:2px dotted #7d7d7d"></div>
<div class="t" style="left:2101.00px;transform-origin:0 0;top:1210.80px;font-size:28px;line-height:35px;color:#111111;font-weight:normal;transform:scaleX(0.9900);">comprar cava online</div>
<div style="position:absolute;left:2100.5px;top:1244.50px;width:250.7px;height:0;border-bottom:2px dotted #7d7d7d"></div>
<div class="t" style="left:2101.00px;transform-origin:0 0;top:1258.80px;font-size:28px;line-height:35px;color:#111111;font-weight:normal;transform:scaleX(0.9900);">vinos y cavas online</div>
<div style="position:absolute;left:2100.5px;top:1292.50px;width:249.1px;height:0;border-bottom:2px dotted #7d7d7d"></div>
<div class="t" style="left:2101.00px;transform-origin:0 0;top:1306.80px;font-size:28px;line-height:35px;color:#111111;font-weight:normal;transform:scaleX(0.9900);">precio de cavas</div>
<div style="position:absolute;left:2100.5px;top:1340.50px;width:195.2px;height:0;border-bottom:2px dotted #7d7d7d"></div>
<div class="t" style="left:2101.00px;transform-origin:0 0;top:1405.80px;font-size:28px;line-height:35px;color:#a9a9a9;font-weight:normal;transform:scaleX(1.0120);">Mostrar más</div>
<svg style="position:absolute;left:2256.0px;top:1419.5px" width="10" height="15"><path d="M0.3,0.8 L8.2,7.2 L0.3,13.8 Z" fill="#aaaaaa"/></svg>
<div class="card" style="left:474.0px;top:1522px;width:483.5px;height:1008px"></div>
<div style="position:absolute;left:474.0px;top:1616px;width:483.5px;height:2px;background:#efefef"></div>
<div class="t" style="left:506.50px;transform-origin:0 0;top:1553.80px;font-size:28px;line-height:35px;color:#04285f;font-weight:bold;transform:scaleX(0.9780);">cava españa</div>
<div class="t" style="left:506.50px;transform-origin:0 0;top:1655.80px;font-size:28px;line-height:35px;color:#8a8a8a;font-weight:normal;transform:scaleX(0.9900);">Tráfico</div>
<div class="t" style="right:1676.00px;transform-origin:100% 0;top:1655.80px;font-size:28px;line-height:35px;color:#1c1c1c;font-weight:normal;transform:scaleX(0.9750);">2.913</div>
<div class="t" style="left:506.50px;transform-origin:0 0;top:1719.30px;font-size:28px;line-height:35px;color:#8a8a8a;font-weight:normal;transform:scaleX(0.9900);">Clics</div>
<div class="t" style="right:1676.00px;transform-origin:100% 0;top:1719.30px;font-size:28px;line-height:35px;color:#1c1c1c;font-weight:normal;transform:scaleX(0.9750);">2.503</div>
<div class="t" style="left:506.50px;transform-origin:0 0;top:1782.80px;font-size:28px;line-height:35px;color:#8a8a8a;font-weight:normal;transform:scaleX(0.9900);">CPC</div>
<div class="t" style="right:1676.00px;transform-origin:100% 0;top:1782.80px;font-size:28px;line-height:35px;color:#1c1c1c;font-weight:normal;transform:scaleX(0.9750);">0,25 €</div>
<div class="t" style="left:506.50px;transform-origin:0 0;top:1846.30px;font-size:28px;line-height:35px;color:#8a8a8a;font-weight:normal;transform:scaleX(0.9900);">Competencia</div>
<div class="t" style="right:1676.00px;transform-origin:100% 0;top:1846.30px;font-size:28px;line-height:35px;color:#1c1c1c;font-weight:normal;transform:scaleX(0.9750);">36%</div>
<svg style="position:absolute;left:474.0px;top:1522px" width="483.5" height="520" viewBox="0 0 483.5 520"><rect x="1.95" y="455.86" width="3.9" height="60.14" rx="1.95" fill="#66b102"/><rect x="10.02" y="459.63" width="3.9" height="56.37" rx="1.95" fill="#66b102"/><rect x="18.09" y="460.43" width="3.9" height="55.57" rx="1.95" fill="#66b102"/><rect x="26.15" y="460.43" width="3.9" height="55.57" rx="1.95" fill="#66b102"/><rect x="34.22" y="424.63" width="3.9" height="91.37" rx="1.95" fill="#579a02"/><rect x="42.29" y="465.55" width="3.9" height="50.45" rx="1.95" fill="#66b102"/><rect x="50.36" y="471.74" width="3.9" height="44.26" rx="1.95" fill="#66b102"/><rect x="58.43" y="466.62" width="3.9" height="49.38" rx="1.95" fill="#66b102"/><rect x="66.49" y="470.66" width="3.9" height="45.34" rx="1.95" fill="#66b102"/><rect x="74.56" y="469.59" width="3.9" height="46.41" rx="1.95" fill="#66b102"/><rect x="82.63" y="466.62" width="3.9" height="49.38" rx="1.95" fill="#66b102"/><rect x="90.70" y="465.55" width="3.9" height="50.45" rx="1.95" fill="#66b102"/><rect x="98.77" y="464.74" width="3.9" height="51.26" rx="1.95" fill="#66b102"/><rect x="106.83" y="463.66" width="3.9" height="52.34" rx="1.95" fill="#66b102"/><rect x="114.90" y="460.43" width="3.9" height="55.57" rx="1.95" fill="#66b102"/><rect x="122.97" y="455.86" width="3.9" height="60.14" rx="1.95" fill="#66b102"/><rect x="131.04" y="394.48" width="3.9" height="121.52" rx="1.95" fill="#579a02"/><rect x="139.11" y="459.63" width="3.9" height="56.37" rx="1.95" fill="#66b102"/><rect x="147.17" y="464.74" width="3.9" height="51.26" rx="1.95" fill="#66b102"/><rect x="155.24" y="468.51" width="3.9" height="47.49" rx="1.95" fill="#66b102"/><rect x="163.31" y="466.62" width="3.9" height="49.38" rx="1.95" fill="#66b102"/><rect x="171.38" y="464.74" width="3.9" height="51.26" rx="1.95" fill="#66b102"/><rect x="179.45" y="465.55" width="3.9" height="50.45" rx="1.95" fill="#66b102"/><rect x="187.51" y="463.66" width="3.9" height="52.34" rx="1.95" fill="#66b102"/><rect x="195.58" y="463.66" width="3.9" height="52.34" rx="1.95" fill="#66b102"/><rect x="203.65" y="466.62" width="3.9" height="49.38" rx="1.95" fill="#66b102"/><rect x="211.72" y="463.66" width="3.9" height="52.34" rx="1.95" fill="#66b102"/><rect x="219.79" y="459.63" width="3.9" height="56.37" rx="1.95" fill="#66b102"/><rect x="227.85" y="407.41" width="3.9" height="108.59" rx="1.95" fill="#579a02"/><rect x="235.92" y="462.59" width="3.9" height="53.41" rx="1.95" fill="#66b102"/><rect x="243.99" y="468.51" width="3.9" height="47.49" rx="1.95" fill="#66b102"/><rect x="252.06" y="465.55" width="3.9" height="50.45" rx="1.95" fill="#66b102"/><rect x="260.13" y="465.55" width="3.9" height="50.45" rx="1.95" fill="#66b102"/><rect x="268.19" y="464.74" width="3.9" height="51.26" rx="1.95" fill="#66b102"/><rect x="276.26" y="464.74" width="3.9" height="51.26" rx="1.95" fill="#66b102"/><rect x="284.33" y="462.59" width="3.9" height="53.41" rx="1.95" fill="#66b102"/><rect x="292.40" y="462.59" width="3.9" height="53.41" rx="1.95" fill="#66b102"/><rect x="300.47" y="462.59" width="3.9" height="53.41" rx="1.95" fill="#66b102"/><rect x="308.53" y="459.63" width="3.9" height="56.37" rx="1.95" fill="#66b102"/><rect x="316.60" y="447.78" width="3.9" height="68.22" rx="1.95" fill="#66b102"/><rect x="324.67" y="392.33" width="3.9" height="123.67" rx="1.95" fill="#579a02"/><rect x="332.74" y="460.43" width="3.9" height="55.57" rx="1.95" fill="#66b102"/><rect x="340.81" y="465.55" width="3.9" height="50.45" rx="1.95" fill="#66b102"/><rect x="348.87" y="463.66" width="3.9" height="52.34" rx="1.95" fill="#66b102"/><rect x="356.94" y="462.59" width="3.9" height="53.41" rx="1.95" fill="#66b102"/><rect x="365.01" y="460.43" width="3.9" height="55.57" rx="1.95" fill="#66b102"/><rect x="373.08" y="459.63" width="3.9" height="56.37" rx="1.95" fill="#66b102"/><rect x="381.15" y="457.74" width="3.9" height="58.26" rx="1.95" fill="#66b102"/><rect x="389.21" y="458.55" width="3.9" height="57.45" rx="1.95" fill="#66b102"/><rect x="397.28" y="460.43" width="3.9" height="55.57" rx="1.95" fill="#66b102"/><rect x="405.35" y="458.55" width="3.9" height="57.45" rx="1.95" fill="#66b102"/><rect x="413.42" y="455.86" width="3.9" height="60.14" rx="1.95" fill="#66b102"/><rect x="421.49" y="397.71" width="3.9" height="118.29" rx="1.95" fill="#579a02"/><rect x="429.55" y="459.63" width="3.9" height="56.37" rx="1.95" fill="#66b102"/><rect x="437.62" y="468.51" width="3.9" height="47.49" rx="1.95" fill="#66b102"/><rect x="445.69" y="463.66" width="3.9" height="52.34" rx="1.95" fill="#66b102"/><rect x="453.76" y="460.43" width="3.9" height="55.57" rx="1.95" fill="#66b102"/><rect x="461.83" y="459.63" width="3.9" height="56.37" rx="1.95" fill="#66b102"/><rect x="469.89" y="457.74" width="3.9" height="58.26" rx="1.95" fill="#66b102"/><rect x="477.96" y="457.74" width="3.9" height="58.26" rx="1.95" fill="#66b102"/><rect x="0" y="514" width="483.5" height="2" fill="#ececec"/></svg>
<div class="t" style="left:506.50px;transform-origin:0 0;top:2071.53px;font-size:23px;line-height:29px;color:#bdbdbd;font-weight:normal;letter-spacing:0.25px;">PALABRAS CLAVE QUE CONTIENEN (33)</div>
<div class="t" style="left:506.50px;transform-origin:0 0;top:2122.80px;font-size:28px;line-height:35px;color:#111111;font-weight:normal;transform:scaleX(0.9900);">cava en españa</div>
<div style="position:absolute;left:506.0px;top:2156.50px;width:196.8px;height:0;border-bottom:2px dotted #7d7d7d"></div>
<div class="t" style="left:506.50px;transform-origin:0 0;top:2170.80px;font-size:28px;line-height:35px;color:#111111;font-weight:normal;transform:scaleX(0.9900);">cavas españolas</div>
<div style="position:absolute;left:506.0px;top:2204.50px;width:207.5px;height:0;border-bottom:2px dotted #7d7d7d"></div>
<div class="t" style="left:506.50px;transform-origin:0 0;top:2218.80px;font-size:28px;line-height:35px;color:#111111;font-weight:normal;transform:scaleX(0.9900);">cava vino</div>
<div style="position:absolute;left:506.0px;top:2252.50px;width:118.1px;height:0;border-bottom:2px dotted #7d7d7d"></div>
<div class="t" style="left:506.50px;transform-origin:0 0;top:2266.80px;font-size:28px;line-height:35px;color:#111111;font-weight:normal;transform:scaleX(0.9900);">marcas de cava</div>
<div style="position:absolute;left:506.0px;top:2300.50px;width:196.7px;height:0;border-bottom:2px dotted #7d7d7d"></div>
<div class="t" style="left:506.50px;transform-origin:0 0;top:2314.80px;font-size:28px;line-height:35px;color:#111111;font-weight:normal;transform:scaleX(0.9900);">cava alcohol</div>
<div style="position:absolute;left:506.0px;top:2348.50px;width:155.1px;height:0;border-bottom:2px dotted #7d7d7d"></div>
<div class="t" style="left:506.50px;transform-origin:0 0;top:2362.80px;font-size:28px;line-height:35px;color:#111111;font-weight:normal;transform:scaleX(0.9900);">cava bebida</div>
<div style="position:absolute;left:506.0px;top:2396.50px;width:150.5px;height:0;border-bottom:2px dotted #7d7d7d"></div>
<div class="t" style="left:506.50px;transform-origin:0 0;top:2461.80px;font-size:28px;line-height:35px;color:#a9a9a9;font-weight:normal;transform:scaleX(1.0120);">Mostrar más</div>
<svg style="position:absolute;left:661.5px;top:2475.5px" width="10" height="15"><path d="M0.3,0.8 L8.2,7.2 L0.3,13.8 Z" fill="#aaaaaa"/></svg>
<div class="card" style="left:1005.5px;top:1522px;width:483.5px;height:1008px"></div>
<div style="position:absolute;left:1005.5px;top:1616px;width:483.5px;height:2px;background:#efefef"></div>
<div class="t" style="left:1038.00px;transform-origin:0 0;top:1553.80px;font-size:28px;line-height:35px;color:#04285f;font-weight:bold;transform:scaleX(0.9780);">cava catalunya</div>
<div class="t" style="left:1038.00px;transform-origin:0 0;top:1655.80px;font-size:28px;line-height:35px;color:#8a8a8a;font-weight:normal;transform:scaleX(0.9900);">Tráfico</div>
<div class="t" style="right:1144.50px;transform-origin:100% 0;top:1655.80px;font-size:28px;line-height:35px;color:#1c1c1c;font-weight:normal;transform:scaleX(0.9750);">4.474</div>
<div class="t" style="left:1038.00px;transform-origin:0 0;top:1719.30px;font-size:28px;line-height:35px;color:#8a8a8a;font-weight:normal;transform:scaleX(0.9900);">Clics</div>
<div class="t" style="right:1144.50px;transform-origin:100% 0;top:1719.30px;font-size:28px;line-height:35px;color:#1c1c1c;font-weight:normal;transform:scaleX(0.9750);">3.839</div>
<div class="t" style="left:1038.00px;transform-origin:0 0;top:1782.80px;font-size:28px;line-height:35px;color:#8a8a8a;font-weight:normal;transform:scaleX(0.9900);">CPC</div>
<div class="t" style="right:1144.50px;transform-origin:100% 0;top:1782.80px;font-size:28px;line-height:35px;color:#1c1c1c;font-weight:normal;transform:scaleX(0.9750);">0,00 €</div>
<div class="t" style="left:1038.00px;transform-origin:0 0;top:1846.30px;font-size:28px;line-height:35px;color:#8a8a8a;font-weight:normal;transform:scaleX(0.9900);">Competencia</div>
<div class="t" style="right:1144.50px;transform-origin:100% 0;top:1846.30px;font-size:28px;line-height:35px;color:#1c1c1c;font-weight:normal;transform:scaleX(0.9750);">39%</div>
<svg style="position:absolute;left:1005.5px;top:1522px" width="483.5" height="520" viewBox="0 0 483.5 520"><rect x="1.95" y="471.74" width="3.9" height="44.26" rx="1.95" fill="#66b102"/><rect x="10.02" y="470.66" width="3.9" height="45.34" rx="1.95" fill="#66b102"/><rect x="18.09" y="469.59" width="3.9" height="46.41" rx="1.95" fill="#66b102"/><rect x="26.15" y="468.51" width="3.9" height="47.49" rx="1.95" fill="#66b102"/><rect x="34.22" y="459.63" width="3.9" height="56.37" rx="1.95" fill="#579a02"/><rect x="42.29" y="469.59" width="3.9" height="46.41" rx="1.95" fill="#66b102"/><rect x="50.36" y="474.70" width="3.9" height="41.30" rx="1.95" fill="#66b102"/><rect x="58.43" y="473.62" width="3.9" height="42.38" rx="1.95" fill="#66b102"/><rect x="66.49" y="473.62" width="3.9" height="42.38" rx="1.95" fill="#66b102"/><rect x="74.56" y="473.62" width="3.9" height="42.38" rx="1.95" fill="#66b102"/><rect x="82.63" y="469.59" width="3.9" height="46.41" rx="1.95" fill="#66b102"/><rect x="90.70" y="469.59" width="3.9" height="46.41" rx="1.95" fill="#66b102"/><rect x="98.77" y="466.62" width="3.9" height="49.38" rx="1.95" fill="#66b102"/><rect x="106.83" y="470.66" width="3.9" height="45.34" rx="1.95" fill="#66b102"/><rect x="114.90" y="465.55" width="3.9" height="50.45" rx="1.95" fill="#66b102"/><rect x="122.97" y="464.74" width="3.9" height="51.26" rx="1.95" fill="#66b102"/><rect x="131.04" y="438.63" width="3.9" height="77.37" rx="1.95" fill="#579a02"/><rect x="139.11" y="464.74" width="3.9" height="51.26" rx="1.95" fill="#66b102"/><rect x="147.17" y="469.59" width="3.9" height="46.41" rx="1.95" fill="#66b102"/><rect x="155.24" y="468.51" width="3.9" height="47.49" rx="1.95" fill="#66b102"/><rect x="163.31" y="466.62" width="3.9" height="49.38" rx="1.95" fill="#66b102"/><rect x="171.38" y="463.66" width="3.9" height="52.34" rx="1.95" fill="#66b102"/><rect x="179.45" y="464.74" width="3.9" height="51.26" rx="1.95" fill="#66b102"/><rect x="187.51" y="464.74" width="3.9" height="51.26" rx="1.95" fill="#66b102"/><rect x="195.58" y="466.62" width="3.9" height="49.38" rx="1.95" fill="#66b102"/><rect x="203.65" y="466.62" width="3.9" height="49.38" rx="1.95" fill="#66b102"/><rect x="211.72" y="465.55" width="3.9" height="50.45" rx="1.95" fill="#66b102"/><rect x="219.79" y="463.66" width="3.9" height="52.34" rx="1.95" fill="#66b102"/><rect x="227.85" y="449.67" width="3.9" height="66.33" rx="1.95" fill="#579a02"/><rect x="235.92" y="466.62" width="3.9" height="49.38" rx="1.95" fill="#66b102"/><rect x="243.99" y="468.51" width="3.9" height="47.49" rx="1.95" fill="#66b102"/><rect x="252.06" y="464.74" width="3.9" height="51.26" rx="1.95" fill="#66b102"/><rect x="260.13" y="468.51" width="3.9" height="47.49" rx="1.95" fill="#66b102"/><rect x="268.19" y="468.51" width="3.9" height="47.49" rx="1.95" fill="#66b102"/><rect x="276.26" y="465.55" width="3.9" height="50.45" rx="1.95" fill="#66b102"/><rect x="284.33" y="464.74" width="3.9" height="51.26" rx="1.95" fill="#66b102"/><rect x="292.40" y="464.74" width="3.9" height="51.26" rx="1.95" fill="#66b102"/><rect x="300.47" y="465.55" width="3.9" height="50.45" rx="1.95" fill="#66b102"/><rect x="308.53" y="463.66" width="3.9" height="52.34" rx="1.95" fill="#66b102"/><rect x="316.60" y="457.74" width="3.9" height="58.26" rx="1.95" fill="#66b102"/><rect x="324.67" y="441.86" width="3.9" height="74.14" rx="1.95" fill="#579a02"/><rect x="332.74" y="464.74" width="3.9" height="51.26" rx="1.95" fill="#66b102"/><rect x="340.81" y="469.59" width="3.9" height="46.41" rx="1.95" fill="#66b102"/><rect x="348.87" y="465.55" width="3.9" height="50.45" rx="1.95" fill="#66b102"/><rect x="356.94" y="466.62" width="3.9" height="49.38" rx="1.95" fill="#66b102"/><rect x="365.01" y="468.51" width="3.9" height="47.49" rx="1.95" fill="#66b102"/><rect x="373.08" y="463.66" width="3.9" height="52.34" rx="1.95" fill="#66b102"/><rect x="381.15" y="463.66" width="3.9" height="52.34" rx="1.95" fill="#66b102"/><rect x="389.21" y="463.66" width="3.9" height="52.34" rx="1.95" fill="#66b102"/><rect x="397.28" y="463.66" width="3.9" height="52.34" rx="1.95" fill="#66b102"/><rect x="405.35" y="464.74" width="3.9" height="51.26" rx="1.95" fill="#66b102"/><rect x="413.42" y="460.43" width="3.9" height="55.57" rx="1.95" fill="#66b102"/><rect x="421.49" y="442.67" width="3.9" height="73.33" rx="1.95" fill="#579a02"/><rect x="429.55" y="464.74" width="3.9" height="51.26" rx="1.95" fill="#66b102"/><rect x="437.62" y="468.51" width="3.9" height="47.49" rx="1.95" fill="#66b102"/><rect x="445.69" y="465.55" width="3.9" height="50.45" rx="1.95" fill="#66b102"/><rect x="453.76" y="466.62" width="3.9" height="49.38" rx="1.95" fill="#66b102"/><rect x="461.83" y="464.74" width="3.9" height="51.26" rx="1.95" fill="#66b102"/><rect x="469.89" y="392.33" width="3.9" height="123.67" rx="1.95" fill="#66b102"/><rect x="477.96" y="393.68" width="3.9" height="122.32" rx="1.95" fill="#66b102"/><rect x="0" y="514" width="483.5" height="2" fill="#ececec"/></svg>
<div class="t" style="left:1038.00px;transform-origin:0 0;top:2071.53px;font-size:23px;line-height:29px;color:#bdbdbd;font-weight:normal;letter-spacing:0.25px;">PALABRAS CLAVE QUE CONTIENEN (30)</div>
<div class="t" style="left:1038.00px;transform-origin:0 0;top:2122.80px;font-size:28px;line-height:35px;color:#111111;font-weight:normal;transform:scaleX(0.9900);">la cava vinos</div>
<div style="position:absolute;left:1037.5px;top:2156.50px;width:161.3px;height:0;border-bottom:2px dotted #7d7d7d"></div>
<div class="t" style="left:1038.00px;transform-origin:0 0;top:2170.80px;font-size:28px;line-height:35px;color:#111111;font-weight:normal;transform:scaleX(0.9900);">cavas catalunya</div>
<div style="position:absolute;left:1037.5px;top:2204.50px;width:199.8px;height:0;border-bottom:2px dotted #7d7d7d"></div>
<div class="t" style="left:1038.00px;transform-origin:0 0;top:2218.80px;font-size:28px;line-height:35px;color:#111111;font-weight:normal;transform:scaleX(0.9900);">marcas de cava catalanes</div>
<div style="position:absolute;left:1037.5px;top:2252.50px;width:323.1px;height:0;border-bottom:2px dotted #7d7d7d"></div>
<div class="t" style="left:1038.00px;transform-origin:0 0;top:2266.80px;font-size:28px;line-height:35px;color:#111111;font-weight:normal;transform:scaleX(0.9900);">cavas catalanes</div>
<div style="position:absolute;left:1037.5px;top:2300.50px;width:199.8px;height:0;border-bottom:2px dotted #7d7d7d"></div>
<div class="t" style="left:1038.00px;transform-origin:0 0;top:2314.80px;font-size:28px;line-height:35px;color:#111111;font-weight:normal;transform:scaleX(0.9900);">mejores cavas catalanes</div>
<div style="position:absolute;left:1037.5px;top:2348.50px;width:306.1px;height:0;border-bottom:2px dotted #7d7d7d"></div>
<div class="t" style="left:1038.00px;transform-origin:0 0;top:2362.80px;font-size:28px;line-height:35px;color:#111111;font-weight:normal;transform:scaleX(0.9900);">bodegas cava</div>
<div style="position:absolute;left:1037.5px;top:2396.50px;width:173.7px;height:0;border-bottom:2px dotted #7d7d7d"></div>
<div class="t" style="left:1038.00px;transform-origin:0 0;top:2461.80px;font-size:28px;line-height:35px;color:#a9a9a9;font-weight:normal;transform:scaleX(1.0120);">Mostrar más</div>
<svg style="position:absolute;left:1193.0px;top:2475.5px" width="10" height="15"><path d="M0.3,0.8 L8.2,7.2 L0.3,13.8 Z" fill="#aaaaaa"/></svg>
<div class="card" style="left:1537.0px;top:1522px;width:483.5px;height:1008px"></div>
<div style="position:absolute;left:1537.0px;top:1616px;width:483.5px;height:2px;background:#efefef"></div>
<div class="t" style="left:1569.50px;transform-origin:0 0;top:1553.80px;font-size:28px;line-height:35px;color:#04285f;font-weight:bold;transform:scaleX(0.9780);">la cava del vino</div>
<div class="t" style="left:1569.50px;transform-origin:0 0;top:1655.80px;font-size:28px;line-height:35px;color:#8a8a8a;font-weight:normal;transform:scaleX(0.9900);">Tráfico</div>
<div class="t" style="right:613.00px;transform-origin:100% 0;top:1655.80px;font-size:28px;line-height:35px;color:#1c1c1c;font-weight:normal;transform:scaleX(0.9750);">1.710</div>
<div class="t" style="left:1569.50px;transform-origin:0 0;top:1719.30px;font-size:28px;line-height:35px;color:#8a8a8a;font-weight:normal;transform:scaleX(0.9900);">Clics</div>
<div class="t" style="right:613.00px;transform-origin:100% 0;top:1719.30px;font-size:28px;line-height:35px;color:#1c1c1c;font-weight:normal;transform:scaleX(0.9750);">1.471</div>
<div class="t" style="left:1569.50px;transform-origin:0 0;top:1782.80px;font-size:28px;line-height:35px;color:#8a8a8a;font-weight:normal;transform:scaleX(0.9900);">CPC</div>
<div class="t" style="right:613.00px;transform-origin:100% 0;top:1782.80px;font-size:28px;line-height:35px;color:#1c1c1c;font-weight:normal;transform:scaleX(0.9750);">0,00 €</div>
<div class="t" style="left:1569.50px;transform-origin:0 0;top:1846.30px;font-size:28px;line-height:35px;color:#8a8a8a;font-weight:normal;transform:scaleX(0.9900);">Competencia</div>
<div class="t" style="right:613.00px;transform-origin:100% 0;top:1846.30px;font-size:28px;line-height:35px;color:#1c1c1c;font-weight:normal;transform:scaleX(0.9750);">34%</div>
<svg style="position:absolute;left:1537.0px;top:1522px" width="483.5" height="520" viewBox="0 0 483.5 520"><rect x="1.95" y="468.51" width="3.9" height="47.49" rx="1.95" fill="#66b102"/><rect x="10.02" y="468.51" width="3.9" height="47.49" rx="1.95" fill="#66b102"/><rect x="18.09" y="465.55" width="3.9" height="50.45" rx="1.95" fill="#66b102"/><rect x="26.15" y="465.55" width="3.9" height="50.45" rx="1.95" fill="#66b102"/><rect x="34.22" y="450.74" width="3.9" height="65.26" rx="1.95" fill="#579a02"/><rect x="42.29" y="466.62" width="3.9" height="49.38" rx="1.95" fill="#66b102"/><rect x="50.36" y="471.74" width="3.9" height="44.26" rx="1.95" fill="#66b102"/><rect x="58.43" y="466.62" width="3.9" height="49.38" rx="1.95" fill="#66b102"/><rect x="66.49" y="466.62" width="3.9" height="49.38" rx="1.95" fill="#66b102"/><rect x="74.56" y="466.62" width="3.9" height="49.38" rx="1.95" fill="#66b102"/><rect x="82.63" y="465.55" width="3.9" height="50.45" rx="1.95" fill="#66b102"/><rect x="90.70" y="463.66" width="3.9" height="52.34" rx="1.95" fill="#66b102"/><rect x="98.77" y="463.66" width="3.9" height="52.34" rx="1.95" fill="#66b102"/><rect x="106.83" y="463.66" width="3.9" height="52.34" rx="1.95" fill="#66b102"/><rect x="114.90" y="460.43" width="3.9" height="55.57" rx="1.95" fill="#66b102"/><rect x="122.97" y="457.74" width="3.9" height="58.26" rx="1.95" fill="#66b102"/><rect x="131.04" y="419.52" width="3.9" height="96.48" rx="1.95" fill="#579a02"/><rect x="139.11" y="460.43" width="3.9" height="55.57" rx="1.95" fill="#66b102"/><rect x="147.17" y="464.74" width="3.9" height="51.26" rx="1.95" fill="#66b102"/><rect x="155.24" y="466.62" width="3.9" height="49.38" rx="1.95" fill="#66b102"/><rect x="163.31" y="468.51" width="3.9" height="47.49" rx="1.95" fill="#66b102"/><rect x="171.38" y="465.55" width="3.9" height="50.45" rx="1.95" fill="#66b102"/><rect x="179.45" y="465.55" width="3.9" height="50.45" rx="1.95" fill="#66b102"/><rect x="187.51" y="464.74" width="3.9" height="51.26" rx="1.95" fill="#66b102"/><rect x="195.58" y="464.74" width="3.9" height="51.26" rx="1.95" fill="#66b102"/><rect x="203.65" y="465.55" width="3.9" height="50.45" rx="1.95" fill="#66b102"/><rect x="211.72" y="464.74" width="3.9" height="51.26" rx="1.95" fill="#66b102"/><rect x="219.79" y="460.43" width="3.9" height="55.57" rx="1.95" fill="#66b102"/><rect x="227.85" y="427.59" width="3.9" height="88.41" rx="1.95" fill="#579a02"/><rect x="235.92" y="458.55" width="3.9" height="57.45" rx="1.95" fill="#66b102"/><rect x="243.99" y="463.66" width="3.9" height="52.34" rx="1.95" fill="#66b102"/><rect x="252.06" y="460.43" width="3.9" height="55.57" rx="1.95" fill="#66b102"/><rect x="260.13" y="464.74" width="3.9" height="51.26" rx="1.95" fill="#66b102"/><rect x="268.19" y="462.59" width="3.9" height="53.41" rx="1.95" fill="#66b102"/><rect x="276.26" y="460.43" width="3.9" height="55.57" rx="1.95" fill="#66b102"/><rect x="284.33" y="458.55" width="3.9" height="57.45" rx="1.95" fill="#66b102"/><rect x="292.40" y="458.55" width="3.9" height="57.45" rx="1.95" fill="#66b102"/><rect x="300.47" y="459.63" width="3.9" height="56.37" rx="1.95" fill="#66b102"/><rect x="308.53" y="457.74" width="3.9" height="58.26" rx="1.95" fill="#66b102"/><rect x="316.60" y="434.59" width="3.9" height="81.41" rx="1.95" fill="#66b102"/><rect x="324.67" y="392.33" width="3.9" height="123.67" rx="1.95" fill="#579a02"/><rect x="332.74" y="455.86" width="3.9" height="60.14" rx="1.95" fill="#66b102"/><rect x="340.81" y="459.63" width="3.9" height="56.37" rx="1.95" fill="#66b102"/><rect x="348.87" y="458.55" width="3.9" height="57.45" rx="1.95" fill="#66b102"/><rect x="356.94" y="457.74" width="3.9" height="58.26" rx="1.95" fill="#66b102"/><rect x="365.01" y="458.55" width="3.9" height="57.45" rx="1.95" fill="#66b102"/><rect x="373.08" y="453.70" width="3.9" height="62.30" rx="1.95" fill="#66b102"/><rect x="381.15" y="449.67" width="3.9" height="66.33" rx="1.95" fill="#66b102"/><rect x="389.21" y="453.70" width="3.9" height="62.30" rx="1.95" fill="#66b102"/><rect x="397.28" y="455.86" width="3.9" height="60.14" rx="1.95" fill="#66b102"/><rect x="405.35" y="454.78" width="3.9" height="61.22" rx="1.95" fill="#66b102"/><rect x="413.42" y="453.70" width="3.9" height="62.30" rx="1.95" fill="#66b102"/><rect x="421.49" y="402.56" width="3.9" height="113.44" rx="1.95" fill="#579a02"/><rect x="429.55" y="459.63" width="3.9" height="56.37" rx="1.95" fill="#66b102"/><rect x="437.62" y="463.66" width="3.9" height="52.34" rx="1.95" fill="#66b102"/><rect x="445.69" y="460.43" width="3.9" height="55.57" rx="1.95" fill="#66b102"/><rect x="453.76" y="455.86" width="3.9" height="60.14" rx="1.95" fill="#66b102"/><rect x="461.83" y="455.86" width="3.9" height="60.14" rx="1.95" fill="#66b102"/><rect x="469.89" y="454.78" width="3.9" height="61.22" rx="1.95" fill="#66b102"/><rect x="477.96" y="453.70" width="3.9" height="62.30" rx="1.95" fill="#66b102"/><rect x="0" y="514" width="483.5" height="2" fill="#ececec"/></svg>
<div class="t" style="left:1569.50px;transform-origin:0 0;top:2071.53px;font-size:23px;line-height:29px;color:#bdbdbd;font-weight:normal;letter-spacing:0.25px;">PALABRAS CLAVE QUE CONTIENEN (28)</div>
<div class="t" style="left:1569.50px;transform-origin:0 0;top:2122.80px;font-size:28px;line-height:35px;color:#111111;font-weight:normal;transform:scaleX(0.9900);">cava españa</div>
<div style="position:absolute;left:1569.0px;top:2156.50px;width:158.2px;height:0;border-bottom:2px dotted #7d7d7d"></div>
<div class="t" style="left:1569.50px;transform-origin:0 0;top:2170.80px;font-size:28px;line-height:35px;color:#111111;font-weight:normal;transform:scaleX(0.9900);">cava en españa</div>
<div style="position:absolute;left:1569.0px;top:2204.50px;width:196.8px;height:0;border-bottom:2px dotted #7d7d7d"></div>
<div class="t" style="left:1569.50px;transform-origin:0 0;top:2218.80px;font-size:28px;line-height:35px;color:#111111;font-weight:normal;transform:scaleX(0.9900);">cava bodegas</div>
<div style="position:absolute;left:1569.0px;top:2252.50px;width:173.7px;height:0;border-bottom:2px dotted #7d7d7d"></div>
<div class="t" style="left:1569.50px;transform-origin:0 0;top:2266.80px;font-size:28px;line-height:35px;color:#111111;font-weight:normal;transform:scaleX(0.9900);">cava wine</div>
<div style="position:absolute;left:1569.0px;top:2300.50px;width:124.3px;height:0;border-bottom:2px dotted #7d7d7d"></div>
<div class="t" style="left:1569.50px;transform-origin:0 0;top:2314.80px;font-size:28px;line-height:35px;color:#111111;font-weight:normal;transform:scaleX(0.9900);">caba o cava</div>
<div style="position:absolute;left:1569.0px;top:2348.50px;width:150.5px;height:0;border-bottom:2px dotted #7d7d7d"></div>
<div class="t" style="left:1569.50px;transform-origin:0 0;top:2362.80px;font-size:28px;line-height:35px;color:#111111;font-weight:normal;transform:scaleX(0.9900);">cava spain</div>
<div style="position:absolute;left:1569.0px;top:2396.50px;width:133.6px;height:0;border-bottom:2px dotted #7d7d7d"></div>
<div class="t" style="left:1569.50px;transform-origin:0 0;top:2461.80px;font-size:28px;line-height:35px;color:#a9a9a9;font-weight:normal;transform:scaleX(1.0120);">Mostrar más</div>
<svg style="position:absolute;left:1724.5px;top:2475.5px" width="10" height="15"><path d="M0.3,0.8 L8.2,7.2 L0.3,13.8 Z" fill="#aaaaaa"/></svg>
<div class="card" style="left:2068.5px;top:1522px;width:483.5px;height:1008px"></div>
<div style="position:absolute;left:2068.5px;top:1616px;width:483.5px;height:2px;background:#efefef"></div>
<div class="t" style="left:2101.00px;transform-origin:0 0;top:1553.80px;font-size:28px;line-height:35px;color:#04285f;font-weight:bold;transform:scaleX(0.9780);">comprar cavas online</div>
<div class="t" style="left:2101.00px;transform-origin:0 0;top:1655.80px;font-size:28px;line-height:35px;color:#8a8a8a;font-weight:normal;transform:scaleX(0.9900);">Tráfico</div>
<div class="t" style="right:81.50px;transform-origin:100% 0;top:1655.80px;font-size:28px;line-height:35px;color:#1c1c1c;font-weight:normal;transform:scaleX(0.9750);">747</div>
<div class="t" style="left:2101.00px;transform-origin:0 0;top:1719.30px;font-size:28px;line-height:35px;color:#8a8a8a;font-weight:normal;transform:scaleX(0.9900);">Clics</div>
<div class="t" style="right:81.50px;transform-origin:100% 0;top:1719.30px;font-size:28px;line-height:35px;color:#1c1c1c;font-weight:normal;transform:scaleX(0.9750);">639</div>
<div class="t" style="left:2101.00px;transform-origin:0 0;top:1782.80px;font-size:28px;line-height:35px;color:#8a8a8a;font-weight:normal;transform:scaleX(0.9900);">CPC</div>
<div class="t" style="right:81.50px;transform-origin:100% 0;top:1782.80px;font-size:28px;line-height:35px;color:#1c1c1c;font-weight:normal;transform:scaleX(0.9750);">0,00 €</div>
<div class="t" style="left:2101.00px;transform-origin:0 0;top:1846.30px;font-size:28px;line-height:35px;color:#8a8a8a;font-weight:normal;transform:scaleX(0.9900);">Competencia</div>
<div class="t" style="right:81.50px;transform-origin:100% 0;top:1846.30px;font-size:28px;line-height:35px;color:#1c1c1c;font-weight:normal;transform:scaleX(0.9750);">25%</div>
<svg style="position:absolute;left:2068.5px;top:1522px" width="483.5" height="520" viewBox="0 0 483.5 520"><rect x="1.95" y="475.78" width="3.9" height="40.22" rx="1.95" fill="#66b102"/><rect x="10.02" y="476.85" width="3.9" height="39.15" rx="1.95" fill="#66b102"/><rect x="18.09" y="470.66" width="3.9" height="45.34" rx="1.95" fill="#66b102"/><rect x="26.15" y="465.55" width="3.9" height="50.45" rx="1.95" fill="#66b102"/><rect x="34.22" y="454.78" width="3.9" height="61.22" rx="1.95" fill="#579a02"/><rect x="42.29" y="473.62" width="3.9" height="42.38" rx="1.95" fill="#66b102"/><rect x="50.36" y="473.62" width="3.9" height="42.38" rx="1.95" fill="#66b102"/><rect x="58.43" y="470.66" width="3.9" height="45.34" rx="1.95" fill="#66b102"/><rect x="66.49" y="469.59" width="3.9" height="46.41" rx="1.95" fill="#66b102"/><rect x="74.56" y="468.51" width="3.9" height="47.49" rx="1.95" fill="#66b102"/><rect x="82.63" y="469.59" width="3.9" height="46.41" rx="1.95" fill="#66b102"/><rect x="90.70" y="473.62" width="3.9" height="42.38" rx="1.95" fill="#66b102"/><rect x="98.77" y="471.74" width="3.9" height="44.26" rx="1.95" fill="#66b102"/><rect x="106.83" y="473.62" width="3.9" height="42.38" rx="1.95" fill="#66b102"/><rect x="114.90" y="469.59" width="3.9" height="46.41" rx="1.95" fill="#66b102"/><rect x="122.97" y="462.59" width="3.9" height="53.41" rx="1.95" fill="#66b102"/><rect x="131.04" y="445.63" width="3.9" height="70.37" rx="1.95" fill="#579a02"/><rect x="139.11" y="470.66" width="3.9" height="45.34" rx="1.95" fill="#66b102"/><rect x="147.17" y="471.74" width="3.9" height="44.26" rx="1.95" fill="#66b102"/><rect x="155.24" y="464.74" width="3.9" height="51.26" rx="1.95" fill="#66b102"/><rect x="163.31" y="428.67" width="3.9" height="87.33" rx="1.95" fill="#66b102"/><rect x="171.38" y="452.63" width="3.9" height="63.37" rx="1.95" fill="#66b102"/><rect x="179.45" y="457.74" width="3.9" height="58.26" rx="1.95" fill="#66b102"/><rect x="187.51" y="462.59" width="3.9" height="53.41" rx="1.95" fill="#66b102"/><rect x="195.58" y="464.74" width="3.9" height="51.26" rx="1.95" fill="#66b102"/><rect x="203.65" y="463.66" width="3.9" height="52.34" rx="1.95" fill="#66b102"/><rect x="211.72" y="459.63" width="3.9" height="56.37" rx="1.95" fill="#66b102"/><rect x="219.79" y="435.67" width="3.9" height="80.33" rx="1.95" fill="#66b102"/><rect x="227.85" y="392.33" width="3.9" height="123.67" rx="1.95" fill="#579a02"/><rect x="235.92" y="460.43" width="3.9" height="55.57" rx="1.95" fill="#66b102"/><rect x="243.99" y="462.59" width="3.9" height="53.41" rx="1.95" fill="#66b102"/><rect x="252.06" y="465.55" width="3.9" height="50.45" rx="1.95" fill="#66b102"/><rect x="260.13" y="463.66" width="3.9" height="52.34" rx="1.95" fill="#66b102"/><rect x="268.19" y="463.66" width="3.9" height="52.34" rx="1.95" fill="#66b102"/><rect x="276.26" y="460.43" width="3.9" height="55.57" rx="1.95" fill="#66b102"/><rect x="284.33" y="463.66" width="3.9" height="52.34" rx="1.95" fill="#66b102"/><rect x="292.40" y="464.74" width="3.9" height="51.26" rx="1.95" fill="#66b102"/><rect x="300.47" y="468.51" width="3.9" height="47.49" rx="1.95" fill="#66b102"/><rect x="308.53" y="462.59" width="3.9" height="53.41" rx="1.95" fill="#66b102"/><rect x="316.60" y="455.86" width="3.9" height="60.14" rx="1.95" fill="#66b102"/><rect x="324.67" y="419.52" width="3.9" height="96.48" rx="1.95" fill="#579a02"/><rect x="332.74" y="468.51" width="3.9" height="47.49" rx="1.95" fill="#66b102"/><rect x="340.81" y="470.66" width="3.9" height="45.34" rx="1.95" fill="#66b102"/><rect x="348.87" y="468.51" width="3.9" height="47.49" rx="1.95" fill="#66b102"/><rect x="356.94" y="466.62" width="3.9" height="49.38" rx="1.95" fill="#66b102"/><rect x="365.01" y="465.55" width="3.9" height="50.45" rx="1.95" fill="#66b102"/><rect x="373.08" y="465.55" width="3.9" height="50.45" rx="1.95" fill="#66b102"/><rect x="381.15" y="464.74" width="3.9" height="51.26" rx="1.95" fill="#66b102"/><rect x="389.21" y="465.55" width="3.9" height="50.45" rx="1.95" fill="#66b102"/><rect x="397.28" y="465.55" width="3.9" height="50.45" rx="1.95" fill="#66b102"/><rect x="405.35" y="463.66" width="3.9" height="52.34" rx="1.95" fill="#66b102"/><rect x="413.42" y="453.70" width="3.9" height="62.30" rx="1.95" fill="#66b102"/><rect x="421.49" y="425.71" width="3.9" height="90.29" rx="1.95" fill="#579a02"/><rect x="429.55" y="464.74" width="3.9" height="51.26" rx="1.95" fill="#66b102"/><rect x="437.62" y="470.66" width="3.9" height="45.34" rx="1.95" fill="#66b102"/><rect x="445.69" y="466.62" width="3.9" height="49.38" rx="1.95" fill="#66b102"/><rect x="453.76" y="466.62" width="3.9" height="49.38" rx="1.95" fill="#66b102"/><rect x="461.83" y="465.55" width="3.9" height="50.45" rx="1.95" fill="#66b102"/><rect x="469.89" y="465.55" width="3.9" height="50.45" rx="1.95" fill="#66b102"/><rect x="477.96" y="465.55" width="3.9" height="50.45" rx="1.95" fill="#66b102"/><rect x="0" y="514" width="483.5" height="2" fill="#ececec"/></svg>
<div class="t" style="left:2101.00px;transform-origin:0 0;top:2071.53px;font-size:23px;line-height:29px;color:#bdbdbd;font-weight:normal;letter-spacing:0.25px;">PALABRAS CLAVE QUE CONTIENEN (27)</div>
<div class="t" style="left:2101.00px;transform-origin:0 0;top:2122.80px;font-size:28px;line-height:35px;color:#111111;font-weight:normal;transform:scaleX(0.9900);">comprar cava online</div>
<div style="position:absolute;left:2100.5px;top:2156.50px;width:250.7px;height:0;border-bottom:2px dotted #7d7d7d"></div>
<div class="t" style="left:2101.00px;transform-origin:0 0;top:2170.80px;font-size:28px;line-height:35px;color:#111111;font-weight:normal;transform:scaleX(0.9900);">precio de cavas</div>
<div style="position:absolute;left:2100.5px;top:2204.50px;width:195.2px;height:0;border-bottom:2px dotted #7d7d7d"></div>
<div class="t" style="left:2101.00px;transform-origin:0 0;top:2218.80px;font-size:28px;line-height:35px;color:#111111;font-weight:normal;transform:scaleX(0.9900);">cava bodega</div>
<div style="position:absolute;left:2100.5px;top:2252.50px;width:159.8px;height:0;border-bottom:2px dotted #7d7d7d"></div>
<div class="t" style="left:2101.00px;transform-origin:0 0;top:2266.80px;font-size:28px;line-height:35px;color:#111111;font-weight:normal;transform:scaleX(0.9900);">bodega cava</div>
<div style="position:absolute;left:2100.5px;top:2300.50px;width:159.8px;height:0;border-bottom:2px dotted #7d7d7d"></div>
<div class="t" style="left:2101.00px;transform-origin:0 0;top:2314.80px;font-size:28px;line-height:35px;color:#111111;font-weight:normal;transform:scaleX(0.9900);">cavas vinos</div>
<div style="position:absolute;left:2100.5px;top:2348.50px;width:145.8px;height:0;border-bottom:2px dotted #7d7d7d"></div>
<div class="t" style="left:2101.00px;transform-origin:0 0;top:2362.80px;font-size:28px;line-height:35px;color:#111111;font-weight:normal;transform:scaleX(0.9900);">cava comprar</div>
<div style="position:absolute;left:2100.5px;top:2396.50px;width:169.0px;height:0;border-bottom:2px dotted #7d7d7d"></div>
<div class="t" style="left:2101.00px;transform-origin:0 0;top:2461.80px;font-size:28px;line-height:35px;color:#a9a9a9;font-weight:normal;transform:scaleX(1.0120);">Mostrar más</div>
<svg style="position:absolute;left:2256.0px;top:2475.5px" width="10" height="15"><path d="M0.3,0.8 L8.2,7.2 L0.3,13.8 Z" fill="#aaaaaa"/></svg>
</body></html>
